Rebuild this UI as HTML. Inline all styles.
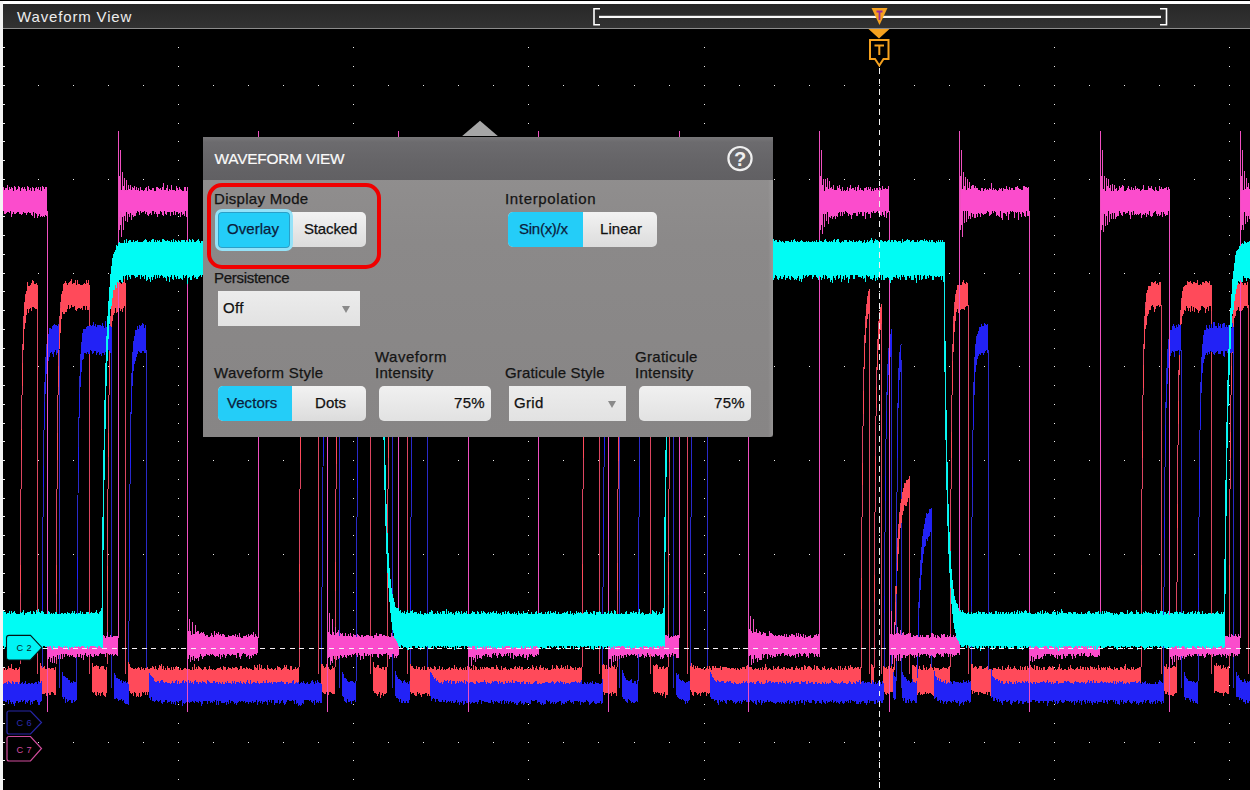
<!DOCTYPE html>
<html><head><meta charset="utf-8">
<style>
*{margin:0;padding:0;box-sizing:border-box}
html,body{width:1250px;height:790px;overflow:hidden;background:#000}
body{position:relative;font-family:"Liberation Sans",sans-serif}
#scope{position:absolute;left:0;top:0}
.topwhite{position:absolute;left:0;top:1px;width:1250px;height:3px;background:#fff}
.leftwhite{position:absolute;left:0;top:1px;width:3px;height:789px;background:#f4f4f4}
.titlebar{position:absolute;left:3px;top:4px;width:1247px;height:24px;background:linear-gradient(#282828,#323232)}
.titleline{position:absolute;left:3px;top:28px;width:1247px;height:1px;background:#8c8c8c}
.title{position:absolute;left:17px;top:7.5px;font-size:15px;color:#ececec;letter-spacing:0.85px}
.dlg{position:absolute;left:203px;top:137px;width:570px;height:300px;background:linear-gradient(#939191,#8b8989 35%,#878585);border-bottom-right-radius:3px}
.dlg .rs{position:absolute;right:0;top:43px;width:5px;bottom:0;background:linear-gradient(90deg,rgba(255,255,255,0),rgba(255,255,255,0.12))}
.dlg .hdr{position:absolute;left:0;top:0;width:570px;height:43px;background:linear-gradient(#787779,#6c6b6e 12%,#656467 60%,#616063)}
.dlg .ttl{position:absolute;left:11.5px;top:13px;font-size:15.4px;color:#fafafa;letter-spacing:-0.2px;-webkit-text-stroke:0.2px #fafafa}
.lbl{position:absolute;font-size:15px;color:#141414;line-height:16px;white-space:nowrap;letter-spacing:0.3px;-webkit-text-stroke:0.25px #141414}
.seg{position:absolute;height:35px;border-radius:5px;overflow:hidden;background:linear-gradient(#f2f2f2,#dcdcdc)}
.seg .on{position:absolute;left:0;top:0;bottom:0;background:#24cdf8}
.seg span{position:absolute;top:-1px;line-height:35px;font-size:15px;white-space:nowrap;letter-spacing:0.05px;-webkit-text-stroke:0.25px currentColor}
.dd{position:absolute;height:35px;background:linear-gradient(#ececec,#e2e2e2)}
.dd span{position:absolute;left:5px;top:-1px;line-height:35px;font-size:15px;color:#111;letter-spacing:0.3px;-webkit-text-stroke:0.25px #111}
.dd i{position:absolute;top:15px;width:0;height:0;border-left:4.5px solid transparent;border-right:4.5px solid transparent;border-top:7px solid #8a8a8a}
.num{position:absolute;height:35px;border-radius:5px;background:linear-gradient(#f0f0f0,#e2e2e2)}
.num span{position:absolute;right:6px;top:-1px;line-height:35px;font-size:15px;color:#111;letter-spacing:0.3px;-webkit-text-stroke:0.25px #111}
</style></head>
<body>
<svg id="scope" width="1250" height="790" viewBox="0 0 1250 790" shape-rendering="crispEdges">
<path fill="#f0f0f0" d="M178 47h1v1h-1zM178 66h1v1h-1zM178 85h1v1h-1zM178 104h1v1h-1zM178 123h1v1h-1zM178 141h1v1h-1zM178 160h1v1h-1zM178 179h1v1h-1zM178 198h1v1h-1zM178 216h1v1h-1zM178 235h1v1h-1zM178 254h1v1h-1zM178 273h1v1h-1zM178 291h1v1h-1zM178 310h1v1h-1zM178 329h1v1h-1zM178 348h1v1h-1zM178 366h1v1h-1zM178 385h1v1h-1zM178 404h1v1h-1zM178 423h1v1h-1zM178 441h1v1h-1zM178 460h1v1h-1zM178 479h1v1h-1zM178 498h1v1h-1zM178 516h1v1h-1zM178 535h1v1h-1zM178 554h1v1h-1zM178 573h1v1h-1zM178 592h1v1h-1zM178 610h1v1h-1zM178 629h1v1h-1zM178 648h1v1h-1zM178 667h1v1h-1zM178 685h1v1h-1zM178 704h1v1h-1zM178 723h1v1h-1zM178 742h1v1h-1zM178 760h1v1h-1zM178 779h1v1h-1zM353 47h1v1h-1zM353 66h1v1h-1zM353 85h1v1h-1zM353 104h1v1h-1zM353 123h1v1h-1zM353 141h1v1h-1zM353 160h1v1h-1zM353 179h1v1h-1zM353 198h1v1h-1zM353 216h1v1h-1zM353 235h1v1h-1zM353 254h1v1h-1zM353 273h1v1h-1zM353 291h1v1h-1zM353 310h1v1h-1zM353 329h1v1h-1zM353 348h1v1h-1zM353 366h1v1h-1zM353 385h1v1h-1zM353 404h1v1h-1zM353 423h1v1h-1zM353 441h1v1h-1zM353 460h1v1h-1zM353 479h1v1h-1zM353 498h1v1h-1zM353 516h1v1h-1zM353 535h1v1h-1zM353 554h1v1h-1zM353 573h1v1h-1zM353 592h1v1h-1zM353 610h1v1h-1zM353 629h1v1h-1zM353 648h1v1h-1zM353 667h1v1h-1zM353 685h1v1h-1zM353 704h1v1h-1zM353 723h1v1h-1zM353 742h1v1h-1zM353 760h1v1h-1zM353 779h1v1h-1zM528 47h1v1h-1zM528 66h1v1h-1zM528 85h1v1h-1zM528 104h1v1h-1zM528 123h1v1h-1zM528 141h1v1h-1zM528 160h1v1h-1zM528 179h1v1h-1zM528 198h1v1h-1zM528 216h1v1h-1zM528 235h1v1h-1zM528 254h1v1h-1zM528 273h1v1h-1zM528 291h1v1h-1zM528 310h1v1h-1zM528 329h1v1h-1zM528 348h1v1h-1zM528 366h1v1h-1zM528 385h1v1h-1zM528 404h1v1h-1zM528 423h1v1h-1zM528 441h1v1h-1zM528 460h1v1h-1zM528 479h1v1h-1zM528 498h1v1h-1zM528 516h1v1h-1zM528 535h1v1h-1zM528 554h1v1h-1zM528 573h1v1h-1zM528 592h1v1h-1zM528 610h1v1h-1zM528 629h1v1h-1zM528 648h1v1h-1zM528 667h1v1h-1zM528 685h1v1h-1zM528 704h1v1h-1zM528 723h1v1h-1zM528 742h1v1h-1zM528 760h1v1h-1zM528 779h1v1h-1zM704 47h1v1h-1zM704 66h1v1h-1zM704 85h1v1h-1zM704 104h1v1h-1zM704 123h1v1h-1zM704 141h1v1h-1zM704 160h1v1h-1zM704 179h1v1h-1zM704 198h1v1h-1zM704 216h1v1h-1zM704 235h1v1h-1zM704 254h1v1h-1zM704 273h1v1h-1zM704 291h1v1h-1zM704 310h1v1h-1zM704 329h1v1h-1zM704 348h1v1h-1zM704 366h1v1h-1zM704 385h1v1h-1zM704 404h1v1h-1zM704 423h1v1h-1zM704 441h1v1h-1zM704 460h1v1h-1zM704 479h1v1h-1zM704 498h1v1h-1zM704 516h1v1h-1zM704 535h1v1h-1zM704 554h1v1h-1zM704 573h1v1h-1zM704 592h1v1h-1zM704 610h1v1h-1zM704 629h1v1h-1zM704 648h1v1h-1zM704 667h1v1h-1zM704 685h1v1h-1zM704 704h1v1h-1zM704 723h1v1h-1zM704 742h1v1h-1zM704 760h1v1h-1zM704 779h1v1h-1zM879 47h1v1h-1zM879 66h1v1h-1zM879 85h1v1h-1zM879 104h1v1h-1zM879 123h1v1h-1zM879 141h1v1h-1zM879 160h1v1h-1zM879 179h1v1h-1zM879 198h1v1h-1zM879 216h1v1h-1zM879 235h1v1h-1zM879 254h1v1h-1zM879 273h1v1h-1zM879 291h1v1h-1zM879 310h1v1h-1zM879 329h1v1h-1zM879 348h1v1h-1zM879 366h1v1h-1zM879 385h1v1h-1zM879 404h1v1h-1zM879 423h1v1h-1zM879 441h1v1h-1zM879 460h1v1h-1zM879 479h1v1h-1zM879 498h1v1h-1zM879 516h1v1h-1zM879 535h1v1h-1zM879 554h1v1h-1zM879 573h1v1h-1zM879 592h1v1h-1zM879 610h1v1h-1zM879 629h1v1h-1zM879 648h1v1h-1zM879 667h1v1h-1zM879 685h1v1h-1zM879 704h1v1h-1zM879 723h1v1h-1zM879 742h1v1h-1zM879 760h1v1h-1zM879 779h1v1h-1zM1054 47h1v1h-1zM1054 66h1v1h-1zM1054 85h1v1h-1zM1054 104h1v1h-1zM1054 123h1v1h-1zM1054 141h1v1h-1zM1054 160h1v1h-1zM1054 179h1v1h-1zM1054 198h1v1h-1zM1054 216h1v1h-1zM1054 235h1v1h-1zM1054 254h1v1h-1zM1054 273h1v1h-1zM1054 291h1v1h-1zM1054 310h1v1h-1zM1054 329h1v1h-1zM1054 348h1v1h-1zM1054 366h1v1h-1zM1054 385h1v1h-1zM1054 404h1v1h-1zM1054 423h1v1h-1zM1054 441h1v1h-1zM1054 460h1v1h-1zM1054 479h1v1h-1zM1054 498h1v1h-1zM1054 516h1v1h-1zM1054 535h1v1h-1zM1054 554h1v1h-1zM1054 573h1v1h-1zM1054 592h1v1h-1zM1054 610h1v1h-1zM1054 629h1v1h-1zM1054 648h1v1h-1zM1054 667h1v1h-1zM1054 685h1v1h-1zM1054 704h1v1h-1zM1054 723h1v1h-1zM1054 742h1v1h-1zM1054 760h1v1h-1zM1054 779h1v1h-1zM1229 47h1v1h-1zM1229 66h1v1h-1zM1229 85h1v1h-1zM1229 104h1v1h-1zM1229 123h1v1h-1zM1229 141h1v1h-1zM1229 160h1v1h-1zM1229 179h1v1h-1zM1229 198h1v1h-1zM1229 216h1v1h-1zM1229 235h1v1h-1zM1229 254h1v1h-1zM1229 273h1v1h-1zM1229 291h1v1h-1zM1229 310h1v1h-1zM1229 329h1v1h-1zM1229 348h1v1h-1zM1229 366h1v1h-1zM1229 385h1v1h-1zM1229 404h1v1h-1zM1229 423h1v1h-1zM1229 441h1v1h-1zM1229 460h1v1h-1zM1229 479h1v1h-1zM1229 498h1v1h-1zM1229 516h1v1h-1zM1229 535h1v1h-1zM1229 554h1v1h-1zM1229 573h1v1h-1zM1229 592h1v1h-1zM1229 610h1v1h-1zM1229 629h1v1h-1zM1229 648h1v1h-1zM1229 667h1v1h-1zM1229 685h1v1h-1zM1229 704h1v1h-1zM1229 723h1v1h-1zM1229 742h1v1h-1zM1229 760h1v1h-1zM1229 779h1v1h-1zM38 85h1v1h-1zM73 85h1v1h-1zM108 85h1v1h-1zM143 85h1v1h-1zM178 85h1v1h-1zM213 85h1v1h-1zM248 85h1v1h-1zM283 85h1v1h-1zM318 85h1v1h-1zM353 85h1v1h-1zM388 85h1v1h-1zM423 85h1v1h-1zM458 85h1v1h-1zM493 85h1v1h-1zM528 85h1v1h-1zM563 85h1v1h-1zM598 85h1v1h-1zM634 85h1v1h-1zM669 85h1v1h-1zM704 85h1v1h-1zM739 85h1v1h-1zM774 85h1v1h-1zM809 85h1v1h-1zM844 85h1v1h-1zM879 85h1v1h-1zM914 85h1v1h-1zM949 85h1v1h-1zM984 85h1v1h-1zM1019 85h1v1h-1zM1054 85h1v1h-1zM1089 85h1v1h-1zM1124 85h1v1h-1zM1159 85h1v1h-1zM1194 85h1v1h-1zM1229 85h1v1h-1zM38 179h1v1h-1zM73 179h1v1h-1zM108 179h1v1h-1zM143 179h1v1h-1zM178 179h1v1h-1zM213 179h1v1h-1zM248 179h1v1h-1zM283 179h1v1h-1zM318 179h1v1h-1zM353 179h1v1h-1zM388 179h1v1h-1zM423 179h1v1h-1zM458 179h1v1h-1zM493 179h1v1h-1zM528 179h1v1h-1zM563 179h1v1h-1zM598 179h1v1h-1zM634 179h1v1h-1zM669 179h1v1h-1zM704 179h1v1h-1zM739 179h1v1h-1zM774 179h1v1h-1zM809 179h1v1h-1zM844 179h1v1h-1zM879 179h1v1h-1zM914 179h1v1h-1zM949 179h1v1h-1zM984 179h1v1h-1zM1019 179h1v1h-1zM1054 179h1v1h-1zM1089 179h1v1h-1zM1124 179h1v1h-1zM1159 179h1v1h-1zM1194 179h1v1h-1zM1229 179h1v1h-1zM38 273h1v1h-1zM73 273h1v1h-1zM108 273h1v1h-1zM143 273h1v1h-1zM178 273h1v1h-1zM213 273h1v1h-1zM248 273h1v1h-1zM283 273h1v1h-1zM318 273h1v1h-1zM353 273h1v1h-1zM388 273h1v1h-1zM423 273h1v1h-1zM458 273h1v1h-1zM493 273h1v1h-1zM528 273h1v1h-1zM563 273h1v1h-1zM598 273h1v1h-1zM634 273h1v1h-1zM669 273h1v1h-1zM704 273h1v1h-1zM739 273h1v1h-1zM774 273h1v1h-1zM809 273h1v1h-1zM844 273h1v1h-1zM879 273h1v1h-1zM914 273h1v1h-1zM949 273h1v1h-1zM984 273h1v1h-1zM1019 273h1v1h-1zM1054 273h1v1h-1zM1089 273h1v1h-1zM1124 273h1v1h-1zM1159 273h1v1h-1zM1194 273h1v1h-1zM1229 273h1v1h-1zM38 366h1v1h-1zM73 366h1v1h-1zM108 366h1v1h-1zM143 366h1v1h-1zM178 366h1v1h-1zM213 366h1v1h-1zM248 366h1v1h-1zM283 366h1v1h-1zM318 366h1v1h-1zM353 366h1v1h-1zM388 366h1v1h-1zM423 366h1v1h-1zM458 366h1v1h-1zM493 366h1v1h-1zM528 366h1v1h-1zM563 366h1v1h-1zM598 366h1v1h-1zM634 366h1v1h-1zM669 366h1v1h-1zM704 366h1v1h-1zM739 366h1v1h-1zM774 366h1v1h-1zM809 366h1v1h-1zM844 366h1v1h-1zM879 366h1v1h-1zM914 366h1v1h-1zM949 366h1v1h-1zM984 366h1v1h-1zM1019 366h1v1h-1zM1054 366h1v1h-1zM1089 366h1v1h-1zM1124 366h1v1h-1zM1159 366h1v1h-1zM1194 366h1v1h-1zM1229 366h1v1h-1zM38 460h1v1h-1zM73 460h1v1h-1zM108 460h1v1h-1zM143 460h1v1h-1zM178 460h1v1h-1zM213 460h1v1h-1zM248 460h1v1h-1zM283 460h1v1h-1zM318 460h1v1h-1zM353 460h1v1h-1zM388 460h1v1h-1zM423 460h1v1h-1zM458 460h1v1h-1zM493 460h1v1h-1zM528 460h1v1h-1zM563 460h1v1h-1zM598 460h1v1h-1zM634 460h1v1h-1zM669 460h1v1h-1zM704 460h1v1h-1zM739 460h1v1h-1zM774 460h1v1h-1zM809 460h1v1h-1zM844 460h1v1h-1zM879 460h1v1h-1zM914 460h1v1h-1zM949 460h1v1h-1zM984 460h1v1h-1zM1019 460h1v1h-1zM1054 460h1v1h-1zM1089 460h1v1h-1zM1124 460h1v1h-1zM1159 460h1v1h-1zM1194 460h1v1h-1zM1229 460h1v1h-1zM38 554h1v1h-1zM73 554h1v1h-1zM108 554h1v1h-1zM143 554h1v1h-1zM178 554h1v1h-1zM213 554h1v1h-1zM248 554h1v1h-1zM283 554h1v1h-1zM318 554h1v1h-1zM353 554h1v1h-1zM388 554h1v1h-1zM423 554h1v1h-1zM458 554h1v1h-1zM493 554h1v1h-1zM528 554h1v1h-1zM563 554h1v1h-1zM598 554h1v1h-1zM634 554h1v1h-1zM669 554h1v1h-1zM704 554h1v1h-1zM739 554h1v1h-1zM774 554h1v1h-1zM809 554h1v1h-1zM844 554h1v1h-1zM879 554h1v1h-1zM914 554h1v1h-1zM949 554h1v1h-1zM984 554h1v1h-1zM1019 554h1v1h-1zM1054 554h1v1h-1zM1089 554h1v1h-1zM1124 554h1v1h-1zM1159 554h1v1h-1zM1194 554h1v1h-1zM1229 554h1v1h-1zM38 648h1v1h-1zM73 648h1v1h-1zM108 648h1v1h-1zM143 648h1v1h-1zM178 648h1v1h-1zM213 648h1v1h-1zM248 648h1v1h-1zM283 648h1v1h-1zM318 648h1v1h-1zM353 648h1v1h-1zM388 648h1v1h-1zM423 648h1v1h-1zM458 648h1v1h-1zM493 648h1v1h-1zM528 648h1v1h-1zM563 648h1v1h-1zM598 648h1v1h-1zM634 648h1v1h-1zM669 648h1v1h-1zM704 648h1v1h-1zM739 648h1v1h-1zM774 648h1v1h-1zM809 648h1v1h-1zM844 648h1v1h-1zM879 648h1v1h-1zM914 648h1v1h-1zM949 648h1v1h-1zM984 648h1v1h-1zM1019 648h1v1h-1zM1054 648h1v1h-1zM1089 648h1v1h-1zM1124 648h1v1h-1zM1159 648h1v1h-1zM1194 648h1v1h-1zM1229 648h1v1h-1zM38 742h1v1h-1zM73 742h1v1h-1zM108 742h1v1h-1zM143 742h1v1h-1zM178 742h1v1h-1zM213 742h1v1h-1zM248 742h1v1h-1zM283 742h1v1h-1zM318 742h1v1h-1zM353 742h1v1h-1zM388 742h1v1h-1zM423 742h1v1h-1zM458 742h1v1h-1zM493 742h1v1h-1zM528 742h1v1h-1zM563 742h1v1h-1zM598 742h1v1h-1zM634 742h1v1h-1zM669 742h1v1h-1zM704 742h1v1h-1zM739 742h1v1h-1zM774 742h1v1h-1zM809 742h1v1h-1zM844 742h1v1h-1zM879 742h1v1h-1zM914 742h1v1h-1zM949 742h1v1h-1zM984 742h1v1h-1zM1019 742h1v1h-1zM1054 742h1v1h-1zM1089 742h1v1h-1zM1124 742h1v1h-1zM1159 742h1v1h-1zM1194 742h1v1h-1zM1229 742h1v1h-1zM3 47h2v1h-2zM3 66h2v1h-2zM3 85h2v1h-2zM3 104h2v1h-2zM3 123h2v1h-2zM3 141h2v1h-2zM3 160h2v1h-2zM3 179h2v1h-2zM3 198h2v1h-2zM3 216h2v1h-2zM3 235h2v1h-2zM3 254h2v1h-2zM3 273h2v1h-2zM3 291h2v1h-2zM3 310h2v1h-2zM3 329h2v1h-2zM3 348h2v1h-2zM3 366h2v1h-2zM3 385h2v1h-2zM3 404h2v1h-2zM3 423h2v1h-2zM3 441h2v1h-2zM3 460h2v1h-2zM3 479h2v1h-2zM3 498h2v1h-2zM3 516h2v1h-2zM3 535h2v1h-2zM3 554h2v1h-2zM3 573h2v1h-2zM3 592h2v1h-2zM3 610h2v1h-2zM3 629h2v1h-2zM3 648h2v1h-2zM3 667h2v1h-2zM3 685h2v1h-2zM3 704h2v1h-2zM3 723h2v1h-2zM3 742h2v1h-2zM3 760h2v1h-2zM3 779h2v1h-2z"/>
<g>
<path fill="none" stroke="#dc4660" stroke-width="1" d="M20 670 L20.3 604.2 L20.6 549.6 L20.9 504.4 L21.2 466.9 L21.5 435.8 L21.8 410 L22.1 388.6 L22.4 370.9 L22.7 356.2 L23 344 L23.3 333.9 L23.6 325.6 L23.9 318.6 L24.2 312.9 L24.5 308.1 L24.8 304.2 L25.1 300.9 L25.4 298.2 L25.7 295.9 L26 294.1M37.5 305V674M56 670 L56.3 604.2 L56.6 549.6 L56.9 504.4 L57.2 466.9 L57.5 435.8 L57.8 410 L58.1 388.6 L58.4 370.9 L58.7 356.2 L59 344 L59.3 333.9 L59.6 325.6 L59.9 318.6 L60.2 312.9 L60.5 308.1 L60.8 304.2 L61.1 300.9 L61.4 298.2 L61.7 295.9 L62 294.1M89.5 305V674M107 670 L107.3 604.2 L107.6 549.6 L107.9 504.4 L108.2 466.9 L108.5 435.8 L108.8 410 L109.1 388.6 L109.4 370.9 L109.7 356.2 L110 344 L110.3 333.9 L110.6 325.6 L110.9 318.6 L111.2 312.9 L111.5 308.1 L111.8 304.2 L112.1 300.9 L112.4 298.2 L112.7 295.9 L113 294.1M125.5 305V674M299 670 L299.3 604.2 L299.6 549.6 L299.9 504.4 L300.2 466.9 L300.5 435.8 L300.8 410 L301.1 388.6 L301.4 370.9 L301.7 356.2 L302 344 L302.3 333.9 L302.6 325.6 L302.9 318.6 L303.2 312.9 L303.5 308.1 L303.8 304.2 L304.1 300.9 L304.4 298.2 L304.7 295.9 L305 294.1M318.5 305V674M335 670 L335.3 604.2 L335.6 549.6 L335.9 504.4 L336.2 466.9 L336.5 435.8 L336.8 410 L337.1 388.6 L337.4 370.9 L337.7 356.2 L338 344 L338.3 333.9 L338.6 325.6 L338.9 318.6 L339.2 312.9 L339.5 308.1 L339.8 304.2 L340.1 300.9 L340.4 298.2 L340.7 295.9 L341 294.1M370.5 305V674M387 670 L387.3 604.2 L387.6 549.6 L387.9 504.4 L388.2 466.9 L388.5 435.8 L388.8 410 L389.1 388.6 L389.4 370.9 L389.7 356.2 L390 344 L390.3 333.9 L390.6 325.6 L390.9 318.6 L391.2 312.9 L391.5 308.1 L391.8 304.2 L392.1 300.9 L392.4 298.2 L392.7 295.9 L393 294.1M407.5 305V674M582 670 L582.3 604.2 L582.6 549.6 L582.9 504.4 L583.2 466.9 L583.5 435.8 L583.8 410 L584.1 388.6 L584.4 370.9 L584.7 356.2 L585 344 L585.3 333.9 L585.6 325.6 L585.9 318.6 L586.2 312.9 L586.5 308.1 L586.8 304.2 L587.1 300.9 L587.4 298.2 L587.7 295.9 L588 294.1M599.5 305V674M617 670 L617.3 604.2 L617.6 549.6 L617.9 504.4 L618.2 466.9 L618.5 435.8 L618.8 410 L619.1 388.6 L619.4 370.9 L619.7 356.2 L620 344 L620.3 333.9 L620.6 325.6 L620.9 318.6 L621.2 312.9 L621.5 308.1 L621.8 304.2 L622.1 300.9 L622.4 298.2 L622.7 295.9 L623 294.1M650.5 305V674M668 670 L668.3 604.2 L668.6 549.6 L668.9 504.4 L669.2 466.9 L669.5 435.8 L669.8 410 L670.1 388.6 L670.4 370.9 L670.7 356.2 L671 344 L671.3 333.9 L671.6 325.6 L671.9 318.6 L672.2 312.9 L672.5 308.1 L672.8 304.2 L673.1 300.9 L673.4 298.2 L673.7 295.9 L674 294.1M687.5 305V674M861 670 L861.3 616.5 L861.6 570.5 L861.9 530.8 L862.2 496.7 L862.5 467.4 L862.8 442.1 L863.1 420.4 L863.3 401.7 L863.6 385.5 L863.9 371.7 L864.2 359.7 L864.5 349.5 L864.8 340.6 L865.1 333 L865.4 326.5 L865.7 320.8 L866 316 L866.3 311.8 L866.6 308.2 L866.9 305.1 L867.2 302.5 L867.5 300.2 L867.7 298.2 L868 296.5 L868.3 295 L868.6 293.8 L868.9 292.7 L869.2 291.8 L869.5 291 L869.8 290.3M869.5 304V674M874 670 L874.3 618.5 L874.5 574.1 L874.8 535.9 L875.1 503.1 L875.3 474.8 L875.6 450.4 L875.8 429.5 L876.1 411.4 L876.4 395.9 L876.6 382.6 L876.9 371.1 L877.2 361.2 L877.4 352.6 L877.7 345.3 L878 339 L878.2 333.6 L878.5 328.9 L878.8 324.9 L879 321.4 L879.3 318.4 L879.5 315.9 L879.8 313.6 L880.1 311.7 L880.3 310.1 L880.6 308.7 L880.9 307.5 L881.1 306.4 L881.4 305.5 L881.7 304.8 L881.9 304.1M881.5 318V674M894 670 L894.5 643.1 L895.1 620 L895.6 600.1 L896.1 582.9 L896.6 568.2 L897.2 555.5 L897.7 544.5 L898.2 535.1 L898.8 527 L899.3 520.1 L899.8 514.1 L900.3 508.9 L900.9 504.5 L901.4 500.6 L901.9 497.3 L902.4 494.5 L903 492.1 L903.5 490 L904 488.2 L904.6 486.6 L905.1 485.3 L905.6 484.1 L906.1 483.1 L906.7 482.3 L907.2 481.5 L907.7 480.9 L908.3 480.4 L908.8 479.9 L909.3 479.5 L909.8 479.1M909.5 495V674M950 670 L950.3 604.2 L950.6 549.6 L950.9 504.4 L951.2 466.9 L951.5 435.8 L951.8 410 L952.1 388.6 L952.4 370.9 L952.7 356.2 L953 344 L953.3 333.9 L953.6 325.6 L953.9 318.6 L954.2 312.9 L954.5 308.1 L954.8 304.2 L955.1 300.9 L955.4 298.2 L955.7 295.9 L956 294.1M968.5 305V674M1141 670 L1141.3 604.2 L1141.6 549.6 L1141.9 504.4 L1142.2 466.9 L1142.5 435.8 L1142.8 410 L1143.1 388.6 L1143.4 370.9 L1143.7 356.2 L1144 344 L1144.3 333.9 L1144.6 325.6 L1144.9 318.6 L1145.2 312.9 L1145.5 308.1 L1145.8 304.2 L1146.1 300.9 L1146.4 298.2 L1146.7 295.9 L1147 294.1M1161.5 305V674M1176.6 670 L1176.9 604.2 L1177.2 549.6 L1177.5 504.4 L1177.8 466.9 L1178.1 435.8 L1178.4 410 L1178.7 388.6 L1179 370.9 L1179.3 356.2 L1179.6 344 L1179.9 333.9 L1180.2 325.6 L1180.5 318.6 L1180.8 312.9 L1181.1 308.1 L1181.4 304.2 L1181.7 300.9 L1182 298.2 L1182.3 295.9 L1182.6 294.1M1211.5 305V674M1229 670 L1229.3 604.2 L1229.6 549.6 L1229.9 504.4 L1230.2 466.9 L1230.5 435.8 L1230.8 410 L1231.1 388.6 L1231.4 370.9 L1231.7 356.2 L1232 344 L1232.3 333.9 L1232.6 325.6 L1232.9 318.6 L1233.2 312.9 L1233.5 308.1 L1233.8 304.2 L1234.1 300.9 L1234.4 298.2 L1234.7 295.9 L1235 294.1M1248.5 305V674"/>
<path fill="none" stroke="#2a2ac8" stroke-width="1" d="M42 684 L42.3 623.1 L42.6 572.7 L42.9 530.8 L43.2 496.2 L43.5 467.4 L43.8 443.6 L44.1 423.8 L44.4 407.4 L44.7 393.9 L45 382.6 L45.3 373.3 L45.6 365.5 L45.9 359.1 L46.2 353.8 L46.5 349.4 L46.8 345.7 L47.1 342.7 L47.4 340.2 L47.7 338.1 L48 336.4M59.5 350V688M76.8 684 L77.1 623.1 L77.4 572.7 L77.7 530.8 L78 496.2 L78.3 467.4 L78.6 443.6 L78.9 423.8 L79.2 407.4 L79.5 393.9 L79.8 382.6 L80.1 373.3 L80.4 365.5 L80.7 359.1 L81 353.8 L81.3 349.4 L81.6 345.7 L81.9 342.7 L82.2 340.2 L82.5 338.1 L82.8 336.4M111.5 350V688M128.7 684 L129 623.1 L129.3 572.7 L129.6 530.8 L129.9 496.2 L130.2 467.4 L130.5 443.6 L130.8 423.8 L131.1 407.4 L131.4 393.9 L131.7 382.6 L132 373.3 L132.3 365.5 L132.6 359.1 L132.9 353.8 L133.2 349.4 L133.5 345.7 L133.8 342.7 L134.1 340.2 L134.4 338.1 L134.7 336.4M146.5 350V688M321.5 684 L321.8 623.1 L322.1 572.7 L322.4 530.8 L322.7 496.2 L323 467.4 L323.3 443.6 L323.6 423.8 L323.9 407.4 L324.2 393.9 L324.5 382.6 L324.8 373.3 L325.1 365.5 L325.4 359.1 L325.7 353.8 L326 349.4 L326.3 345.7 L326.6 342.7 L326.9 340.2 L327.2 338.1 L327.5 336.4M339.5 350V688M356 684 L356.3 623.1 L356.6 572.7 L356.9 530.8 L357.2 496.2 L357.5 467.4 L357.8 443.6 L358.1 423.8 L358.4 407.4 L358.7 393.9 L359 382.6 L359.3 373.3 L359.6 365.5 L359.9 359.1 L360.2 353.8 L360.5 349.4 L360.8 345.7 L361.1 342.7 L361.4 340.2 L361.7 338.1 L362 336.4M392.5 350V688M410 684 L410.3 623.1 L410.6 572.7 L410.9 530.8 L411.2 496.2 L411.5 467.4 L411.8 443.6 L412.1 423.8 L412.4 407.4 L412.7 393.9 L413 382.6 L413.3 373.3 L413.6 365.5 L413.9 359.1 L414.2 353.8 L414.5 349.4 L414.8 345.7 L415.1 342.7 L415.4 340.2 L415.7 338.1 L416 336.4M427.5 350V688M602.5 684 L602.8 623.1 L603.1 572.7 L603.4 530.8 L603.7 496.2 L604 467.4 L604.3 443.6 L604.6 423.8 L604.9 407.4 L605.2 393.9 L605.5 382.6 L605.8 373.3 L606.1 365.5 L606.4 359.1 L606.7 353.8 L607 349.4 L607.3 345.7 L607.6 342.7 L607.9 340.2 L608.2 338.1 L608.5 336.4M619.5 350V688M638 684 L638.3 623.1 L638.6 572.7 L638.9 530.8 L639.2 496.2 L639.5 467.4 L639.8 443.6 L640.1 423.8 L640.4 407.4 L640.7 393.9 L641 382.6 L641.3 373.3 L641.6 365.5 L641.9 359.1 L642.2 353.8 L642.5 349.4 L642.8 345.7 L643.1 342.7 L643.4 340.2 L643.7 338.1 L644 336.4M673.5 350V688M690 684 L690.3 623.1 L690.6 572.7 L690.9 530.8 L691.2 496.2 L691.5 467.4 L691.8 443.6 L692.1 423.8 L692.4 407.4 L692.7 393.9 L693 382.6 L693.3 373.3 L693.6 365.5 L693.9 359.1 L694.2 353.8 L694.5 349.4 L694.8 345.7 L695.1 342.7 L695.4 340.2 L695.7 338.1 L696 336.4M707.5 350V688M884 684 L884.3 634.3 L884.5 591.5 L884.8 554.6 L885.1 522.9 L885.3 495.6 L885.6 472.1 L885.8 451.9 L886.1 434.5 L886.4 419.5 L886.6 406.7 L886.9 395.6 L887.2 386 L887.4 377.8 L887.7 370.7 L888 364.6 L888.2 359.4 L888.5 354.9 L888.8 351 L889 347.7 L889.3 344.8 L889.5 342.3 L889.8 340.2 L890.1 338.3 L890.3 336.8 L890.6 335.4 L890.9 334.2 L891.1 333.2 L891.4 332.4 L891.7 331.6 L891.9 331M891.5 347V688M896 684 L896.2 637.1 L896.4 596.5 L896.5 561.5 L896.7 531.3 L896.9 505.2 L897.1 482.7 L897.2 463.2 L897.4 446.4 L897.6 431.9 L897.8 419.4 L897.9 408.5 L898.1 399.2 L898.3 391.1 L898.5 384.1 L898.6 378.1 L898.8 372.9 L899 368.4 L899.2 364.5 L899.3 361.2 L899.5 358.3 L899.7 355.8 L899.9 353.7 L900 351.8 L900.2 350.2 L900.4 348.8 L900.6 347.6 L900.8 346.6 L900.9 345.7 L901.1 344.9 L901.3 344.2M901.5 360V688M917 684 L917.5 659.6 L918 638.6 L918.5 620.6 L918.9 605 L919.4 591.7 L919.9 580.1 L920.4 570.2 L920.9 561.7 L921.4 554.4 L921.9 548 L922.4 542.6 L922.8 537.9 L923.3 533.9 L923.8 530.4 L924.3 527.4 L924.8 524.9 L925.3 522.7 L925.8 520.8 L926.3 519.1 L926.7 517.7 L927.2 516.5 L927.7 515.5 L928.2 514.6 L928.7 513.8 L929.2 513.1 L929.7 512.5 L930.1 512 L930.6 511.6 L931.1 511.3 L931.6 510.9M931.5 529V688M971 684 L971.3 623.1 L971.6 572.7 L971.9 530.8 L972.2 496.2 L972.5 467.4 L972.8 443.6 L973.1 423.8 L973.4 407.4 L973.7 393.9 L974 382.6 L974.3 373.3 L974.6 365.5 L974.9 359.1 L975.2 353.8 L975.5 349.4 L975.8 345.7 L976.1 342.7 L976.4 340.2 L976.7 338.1 L977 336.4M988.5 350V688M1163.5 684 L1163.8 623.1 L1164.1 572.7 L1164.4 530.8 L1164.7 496.2 L1165 467.4 L1165.3 443.6 L1165.6 423.8 L1165.9 407.4 L1166.2 393.9 L1166.5 382.6 L1166.8 373.3 L1167.1 365.5 L1167.4 359.1 L1167.7 353.8 L1168 349.4 L1168.3 345.7 L1168.6 342.7 L1168.9 340.2 L1169.2 338.1 L1169.5 336.4M1181.5 350V688M1198 684 L1198.3 623.1 L1198.6 572.7 L1198.9 530.8 L1199.2 496.2 L1199.5 467.4 L1199.8 443.6 L1200.1 423.8 L1200.4 407.4 L1200.7 393.9 L1201 382.6 L1201.3 373.3 L1201.6 365.5 L1201.9 359.1 L1202.2 353.8 L1202.5 349.4 L1202.8 345.7 L1203.1 342.7 L1203.4 340.2 L1203.7 338.1 L1204 336.4M1233.5 350V688"/>
<path fill="#ff4a5a" d="M3 667.6H4V669.9H5V667.8H6V670H7V668.9H8V666.4H9V667.9H10V668.1H11V664.1H12V669H13V669.2H14V669.6H15V667.9H16V668.1H17V669.6H18V668.8H19V668.1H20V692.7H19V695.8H18V693.6H17V696.9H16V692.2H15V695.9H14V692H13V694.7H12V697H11V693.9H10V693.3H9V695.7H8V695.9H7V694.2H6V696H5V695.4H4V692.5H3ZM40 662.6H41V666.1H42V667.8H43V666.8H44V665.9H45V668.6H46V668.5H47V665.4H48V668H49V667.9H50V668.7H51V668.1H52V667.5H53V667.9H54V669.9H55V667.1H56V694.9H55V694.6H54V692.6H53V692.4H52V692.2H51V695H50V694.5H49V692.8H48V692H47V695.7H46V693.3H45V694.4H44V693.9H43V693.9H42V690.6H41V693.9H40ZM92 662.7H93V666.8H94V666.3H95V665.7H96V665H97V666.3H98V665.6H99V668.6H100V667.4H101V666H102V666.2H103V666.1H104V669H105V669.5H106V666.5H107V693.4H106V696.5H105V695.5H104V694.6H103V692.3H102V692.8H101V695.7H100V692.9H99V694.6H98V691.9H97V696.4H96V695.2H95V691.9H94V693.1H93V692.2H92ZM128 662.4H129V663.8H130V666.8H131V668H132V668.3H133V669H134V668.5H135V667.7H136V668.5H137V668.3H138V667.2H139V667.6H140V669.6H141V667.4H142V669.1H143V668.2H144V669.8H145V667.6H146V668.4H147V667.3H148V668.7H149V668.5H150V667.6H151V668.3H152V666.3H153V666.7H154V669.4H155V666.3H156V668.7H157V669.7H158V667.7H159V664.8H160V665.6H161V663.9H162V668.9H163V666.1H164V669.7H165V668.4H166V669.6H167V666.1H168V667.9H169V667.9H170V669.9H171V667.1H172V669.7H173V666.9H174V668.8H175V666.6H176V666.4H177V667.4H178V667.6H179V669.9H180V667.9H181V669.9H182V669.9H183V668.7H184V668.3H185V668.1H186V669.1H187V669.2H188V669.2H189V669.3H190V669.6H191V669.9H192V667.4H193V669.6H194V664.4H195V668.8H196V666.9H197V668.5H198V666.1H199V666.9H200V667.9H201V668.8H202V669.9H203V669.2H204V666.9H205V667.1H206V669.3H207V669.7H208V669.4H209V666.2H210V669.4H211V669.2H212V670H213V668.6H214V669.6H215V669.8H216V668.8H217V667.8H218V668.4H219V667.8H220V666.7H221V669.2H222V669.7H223V665.8H224V666.6H225V667.4H226V669.7H227V668.5H228V667H229V668.1H230V667.7H231V669.2H232V667H233V668.2H234V667.9H235V666.6H236V667.3H237V668.3H238V669.9H239V668.8H240V665.7H241V666.1H242V669H243V667.7H244V668H245V669.3H246V667.4H247V668H248V669.4H249V667.6H250V669.3H251V668.6H252V669.8H253V669.6H254V665.3H255V667H256V668.2H257V664.9H258V669.7H259V664.3H260V668.4H261V665.4H262V668.5H263V668.5H264V668.4H265V669.2H266V670H267V664.6H268V667.5H269V669.3H270V668.9H271V668.1H272V668.7H273V669.8H274V669.3H275V668.2H276V669.6H277V666.2H278V667H279V666.5H280V668.3H281V669.9H282V668.7H283V667.7H284V665.3H285V667.3H286V664.6H287V669.3H288V668.5H289V669.6H290V666.3H291V666H292V669.5H293V668.5H294V669.4H295V666.6H296V668.8H297V668.4H298V668.5H299V697H298V694.1H297V693.1H296V693.1H295V695.7H294V695.4H293V694.5H292V693.4H291V692H290V695.6H289V695.2H288V692.9H287V693.6H286V695.7H285V694.2H284V693.3H283V692H282V692.5H281V694.5H280V692.6H279V694.6H278V693.6H277V694.5H276V693.1H275V695.8H274V695.4H273V694.8H272V694.5H271V693.5H270V694.8H269V695.7H268V692.9H267V696.3H266V694.6H265V692.4H264V692.8H263V694.3H262V692.7H261V694H260V693.2H259V696.7H258V692.5H257V692.4H256V693.1H255V695.4H254V696H253V695.1H252V696.3H251V693H250V692.9H249V692.7H248V698.1H247V692.4H246V695H245V694.4H244V693H243V692.4H242V696.4H241V695H240V692.2H239V697.4H238V696.1H237V695.8H236V692.6H235V692.8H234V694.7H233V694.1H232V693.2H231V695.8H230V694.1H229V693.5H228V692.4H227V694.6H226V694.8H225V693.7H224V695.3H223V694.8H222V692H221V692.8H220V695.4H219V692.9H218V693.5H217V694.3H216V694H215V694.7H214V696.3H213V692.7H212V693H211V693H210V692.3H209V694.8H208V696H207V692.5H206V694.2H205V692.2H204V695H203V696.2H202V694.5H201V693.9H200V693H199V695.2H198V697.1H197V694.9H196V692.9H195V694H194V693.2H193V695.1H192V692.4H191V694H190V693.1H189V694.5H188V694.4H187V695H186V692.8H185V692.9H184V695.3H183V694.7H182V694.6H181V693.2H180V693.1H179V693.4H178V693.7H177V697H176V693H175V693.5H174V696.8H173V695H172V694.7H171V695.9H170V692.1H169V693.1H168V694H167V692.3H166V692.5H165V695.2H164V693.3H163V693.6H162V694H161V696.8H160V696.7H159V692.2H158V693.7H157V692.8H156V693.9H155V694.2H154V694.7H153V695.3H152V694.8H151V692.4H150V693.2H149V692.1H148V695.1H147V692.1H146V694.8H145V692.1H144V693H143V692.2H142V696H141V697.3H140V693.4H139V697.4H138V696.4H137V696.7H136V692.5H135V692H134V695.8H133V693.1H132V693.9H131V693.3H130V690.9H129V690.2H128ZM321 663.9H322V663.8H323V666.1H324V668.4H325V666.9H326V664H327V667.6H328V666.9H329V669.4H330V669.7H331V669.3H332V666H333V667.7H334V669.6H335V694H334V693.5H333V693.8H332V692.8H331V692.1H330V692.4H329V695.2H328V695.4H327V692.4H326V693.6H325V694.1H324V693.1H323V692.4H322V692.2H321ZM373 662.3H374V666.6H375V667.9H376V667.3H377V664.8H378V665.1H379V667.5H380V667.5H381V669.4H382V666.9H383V667H384V669.9H385V667.3H386V667.3H387V693H386V693.8H385V694.4H384V695.7H383V693.2H382V695H381V697.7H380V692.3H379V694.3H378V696.2H377V694.3H376V693.1H375V692.8H374V691.4H373ZM410 663.6H411V665.9H412V666.1H413V668.1H414V668.8H415V668.7H416V665.9H417V669.3H418V667.3H419V667.4H420V669.8H421V668.9H422V666.9H423V669.9H424V666.4H425V669.5H426V669.9H427V667H428V666.9H429V669.1H430V666.5H431V668.2H432V669.3H433V669H434V666.2H435V666.8H436V670H437V668.7H438V669.1H439V666.3H440V669.9H441V669.2H442V667.3H443V670H444V668.5H445V669.6H446V669.1H447V669.4H448V667.6H449V667H450V669.9H451V667.6H452V667.9H453V668.9H454V664.5H455V669.3H456V666.5H457V669H458V669.5H459V668.3H460V667.3H461V669.1H462V669.7H463V667.8H464V669.7H465V667.2H466V669.8H467V666.2H468V669.3H469V666.5H470V669.4H471V667.6H472V669.6H473V665.1H474V669.8H475V666.1H476V667.4H477V669.6H478V668.9H479V670H480V667.1H481V668.5H482V667.2H483V668.9H484V666.5H485V668.2H486V667.1H487V666.7H488V667.6H489V667.7H490V668.7H491V666.9H492V667.2H493V666.9H494V668.7H495V668.9H496V664.8H497V667.2H498V668.5H499V670H500V669.7H501V666.3H502V669.8H503V668.3H504V668.4H505V666.9H506V668.9H507V669.5H508V668.9H509V669.8H510V668.4H511V667.9H512V668.8H513V668.5H514V667.4H515V666.4H516V668.6H517V667.2H518V667.9H519V665.9H520V669.1H521V667H522V667.3H523V669.8H524V669.1H525V669.4H526V669.4H527V667.9H528V668.6H529V668.6H530V667.9H531V669H532V664.8H533V666.5H534V669.7H535V667.9H536V666.3H537V669.1H538V669.5H539V666.9H540V665H541V668H542V667.7H543V667.1H544V669.6H545V668.4H546V668.7H547V667.7H548V669.7H549V669.9H550V669.7H551V668.5H552V664.7H553V668.6H554V667.7H555V669H556V664.7H557V666.4H558V667.7H559V669.2H560V668.4H561V664.8H562V667.9H563V666.8H564V668.6H565V666.2H566V668.8H567V664.9H568V668.9H569V669.4H570V666.1H571V667.1H572V667.8H573V667.9H574V670H575V666.6H576V669.9H577V667.8H578V668H579V667.1H580V668H581V667.9H582V693.9H581V692.5H580V693.3H579V692.3H578V694.8H577V694.2H576V695H575V694.5H574V694.2H573V694.1H572V692.1H571V694H570V693.8H569V694.2H568V693.9H567V695.9H566V694.7H565V692.5H564V692H563V692.2H562V692.1H561V694H560V692.5H559V694.2H558V694.5H557V696.1H556V694.5H555V697.9H554V694.5H553V694.2H552V693.9H551V692.3H550V694.3H549V693.8H548V696.2H547V693H546V694.1H545V693.1H544V695.7H543V694H542V695.9H541V696.5H540V695.9H539V695H538V695.4H537V694.4H536V695.4H535V693.3H534V693.2H533V695H532V692H531V695H530V695.9H529V695H528V695.7H527V693.7H526V692.4H525V697.1H524V694.3H523V694.2H522V694.9H521V692.1H520V696.2H519V695.4H518V693.6H517V694.4H516V692.4H515V693H514V693.1H513V694.7H512V694.5H511V696.3H510V692.9H509V694.4H508V695.3H507V695.7H506V693.2H505V694.8H504V695.9H503V692.6H502V692.1H501V695.3H500V695.7H499V692.1H498V695.4H497V692.6H496V694.1H495V694.3H494V695.6H493V696H492V692.6H491V695.5H490V697H489V694.5H488V696.3H487V694.7H486V695.7H485V695.5H484V693.8H483V692.7H482V696H481V694.6H480V692.5H479V695.3H478V692.3H477V692.2H476V695.1H475V695.3H474V693.4H473V692.4H472V694.5H471V692.3H470V692.6H469V694.3H468V694H467V692.8H466V692.2H465V692.1H464V695.4H463V693.2H462V693H461V696H460V694.3H459V692.1H458V692.7H457V692H456V692.9H455V695.1H454V692.4H453V696.9H452V694.1H451V694.7H450V692.1H449V694H448V694H447V695H446V694.2H445V693.1H444V692.1H443V692.9H442V695.3H441V692H440V693.4H439V694.6H438V693.9H437V695.2H436V693.3H435V692.2H434V695H433V692.8H432V693H431V692.1H430V695.7H429V693.6H428V696H427V692.7H426V692.6H425V693.7H424V693.8H423V693.8H422V696.5H421V694.7H420V693.4H419V693.5H418V692.1H417V696.3H416V696.3H415V695.1H414V692.5H413V692.6H412V694.2H411V691.7H410ZM602 664.8H603V664.2H604V664.9H605V668.5H606V665.2H607V668.7H608V667.4H609V666.9H610V667.9H611V666H612V666.2H613V666.9H614V665H615V669.3H616V669.3H617V695.6H616V692.5H615V693.2H614V694.2H613V692.1H612V695.7H611V692.5H610V693.8H609V692.9H608V692.5H607V693.2H606V693.3H605V694.9H604V691.9H603V692H602ZM653 664.7H654V665.6H655V665.2H656V663.9H657V665.1H658V668.5H659V667.1H660V667.4H661V668.5H662V667.3H663V666.4H664V669H665V667.9H666V666.9H667V667.3H668V694.7H667V694.8H666V697.6H665V692H664V693.8H663V695.7H662V693H661V695.1H660V692.8H659V693H658V692.2H657V693H656V691.8H655V693.8H654V692H653ZM690 665.7H691V663.1H692V667.1H693V665.4H694V668.5H695V665.6H696V667.7H697V666.1H698V668H699V668.2H700V667.5H701V668.9H702V669H703V667.6H704V669.8H705V668.9H706V668.1H707V666.2H708V668.7H709V666H710V668.3H711V669.7H712V666.1H713V666.3H714V667.6H715V666.1H716V668.1H717V668.4H718V668.1H719V668H720V666H721V670H722V667.1H723V666.9H724V666.9H725V666.5H726V666.7H727V668.3H728V668.2H729V668H730V669.4H731V668.4H732V668H733V668.1H734V669.2H735V668.4H736V669.8H737V668.1H738V668.7H739V669.9H740V668.1H741V668.7H742V667.2H743V666.8H744V666.6H745V669.2H746V666.2H747V665.3H748V666.7H749V666.7H750V666.7H751V666.7H752V669.3H753V669.8H754V668.9H755V667.9H756V668.6H757V669.2H758V667.7H759V669.7H760V667.9H761V669.8H762V666.9H763V669.7H764V667.5H765V663.9H766V667.4H767V669.8H768V669.4H769V668.1H770V669.4H771V669.5H772V669.8H773V666.4H774V668.9H775V668.2H776V668.5H777V666.8H778V666.4H779V669H780V668.5H781V667.8H782V669.3H783V666.5H784V666.6H785V669.7H786V667.7H787V669.1H788V667.8H789V669.4H790V669.1H791V667.4H792V667.4H793V669.6H794V669.6H795V668.2H796V665.9H797V668.2H798V669.4H799V667.6H800V670H801V667.1H802V666.8H803V669.7H804V664.9H805V665.7H806V668.9H807V666.7H808V666.3H809V666.4H810V667.4H811V667.9H812V669.9H813V668.8H814V664.6H815V670H816V665.7H817V666.2H818V668.2H819V669.1H820V669.6H821V669.8H822V667.1H823V668.4H824V666.4H825V669.3H826V669.7H827V669.1H828V668.3H829V669.7H830V668H831V667.2H832V668.9H833V668.9H834V669.6H835V667.9H836V668.6H837V669.6H838V666H839V669.9H840V666.1H841V669.8H842V667.5H843V670H844V667.8H845V666.4H846V669.1H847V670H848V666.4H849V667.9H850V664.5H851V666.9H852V667.2H853V669.2H854V668.3H855V666.8H856V668.2H857V667H858V666.5H859V668.5H860V668.3H861V692.1H860V692.3H859V695.9H858V695H857V692H856V695.2H855V694.8H854V693.6H853V692.9H852V694.3H851V696.2H850V693.3H849V693.1H848V692.8H847V695.8H846V695.3H845V695.8H844V696.6H843V695.4H842V695.7H841V695H840V695.8H839V694.3H838V692.1H837V693H836V693.2H835V693.8H834V694.3H833V695.8H832V693.9H831V692.6H830V695.1H829V692.2H828V694.9H827V692.1H826V695.3H825V694.5H824V692.2H823V696.5H822V695.4H821V693.8H820V692.2H819V693H818V692H817V694.2H816V693.2H815V694.1H814V693.8H813V697.1H812V692.9H811V694.3H810V692.2H809V694.6H808V696H807V692.2H806V697.2H805V694.8H804V693.3H803V693.9H802V692.2H801V692.4H800V692.7H799V695.1H798V693.7H797V695H796V692.4H795V693.5H794V695.4H793V695H792V693.1H791V692.3H790V693.1H789V694.8H788V692.5H787V694.3H786V693H785V693.9H784V694.3H783V694H782V696.3H781V694.9H780V694.9H779V693.6H778V697.3H777V694.8H776V694.8H775V694.1H774V692.7H773V695.3H772V696.2H771V694.6H770V694.1H769V693.7H768V692.9H767V695.9H766V693.5H765V692.9H764V695.3H763V693.3H762V692.9H761V694.5H760V693.7H759V692.9H758V694.3H757V693.9H756V692.9H755V693.2H754V692.1H753V696.1H752V692.7H751V695.4H750V692.4H749V695.3H748V692.4H747V695.8H746V692.1H745V695.6H744V692.4H743V695.3H742V696.4H741V694.7H740V693.1H739V693.9H738V692.1H737V692.9H736V695.1H735V692H734V693.8H733V692.1H732V694.8H731V694.1H730V692.1H729V693.2H728V693.9H727V694.2H726V692.9H725V692.6H724V694.7H723V692.8H722V695.9H721V692.7H720V695.7H719V693.4H718V694.8H717V697.8H716V692.5H715V692.1H714V696H713V693.4H712V694.6H711V694.2H710V692.5H709V693.5H708V692.9H707V695.5H706V692.2H705V692.1H704V693.1H703V692H702V693.1H701V695.6H700V693H699V693.6H698V694.5H697V692.5H696V692.1H695V691.8H694V696.4H693V694.8H692V692H691V690.3H690ZM871 664.1H872V665.3H873V667.5H874V691.9H873V695.9H872V694H871ZM883 665.8H884V667.1H885V667.7H886V666.7H887V668.8H888V665.7H889V666.1H890V667.7H891V666.1H892V669.3H893V667.3H894V692.7H893V692.1H892V692.1H891V692.2H890V692H889V694H888V693H887V694.5H886V694.3H885V691.9H884V691.3H883ZM912 664.9H913V664.5H914V665.7H915V666.8H916V665H917V666.7H918V668.7H919V665.8H920V668.7H921V669.5H922V669.9H923V664.8H924V668.4H925V669.8H926V667.1H927V669.9H928V669.2H929V668.3H930V664.4H931V666.8H932V668.1H933V669.5H934V667.4H935V667.5H936V668.4H937V667.7H938V667.9H939V669.5H940V669.4H941V668.6H942V668.4H943V667.3H944V668.4H945V668.4H946V667.5H947V668.7H948V666.9H949V665.8H950V695.1H949V692.8H948V692.2H947V694.9H946V694.3H945V696H944V693.3H943V694.9H942V692.3H941V693H940V692.5H939V692.9H938V693.4H937V693.8H936V693.2H935V696.6H934V696.2H933V694.9H932V694.1H931V693H930V692.7H929V694.2H928V692.9H927V693.8H926V692.4H925V694.4H924V694.4H923V694.6H922V693.5H921V695.3H920V691.8H919V693.1H918V694.8H917V692.9H916V692.5H915V692.5H914V692.9H913V692.7H912ZM971 664.3H972V663.8H973V667.8H974V666.6H975V665.5H976V666.8H977V669.4H978V668.4H979V665.7H980V665.7H981V665.9H982V668.5H983V669.3H984V668.2H985V668H986V666.7H987V666.3H988V669.9H989V669H990V668.5H991V669H992V669.6H993V667.5H994V668.3H995V668.2H996V669.3H997V669.3H998V667.1H999V668.7H1000V668.7H1001V669.9H1002V665.8H1003V669.9H1004V669.6H1005V668.2H1006V668.5H1007V667.2H1008V664.7H1009V669.3H1010V667.2H1011V668.8H1012V669.4H1013V667.5H1014V665.6H1015V667.9H1016V669.2H1017V669.7H1018V669.2H1019V669.7H1020V666.1H1021V670H1022V666.5H1023V669.9H1024V667.4H1025V665.7H1026V669.8H1027V666H1028V667.5H1029V667.3H1030V665.2H1031V666.7H1032V668H1033V669.4H1034V664.6H1035V670H1036V666.2H1037V666.3H1038V669.9H1039V666.9H1040V669.6H1041V667.9H1042V669.9H1043V667.1H1044V667.4H1045V669.8H1046V669.8H1047V669.1H1048V667.3H1049V666.3H1050V666.9H1051V668.3H1052V665.5H1053V667.2H1054V669.7H1055V668.5H1056V669.6H1057V669H1058V666.7H1059V664.3H1060V668.5H1061V668.2H1062V669.5H1063V669.6H1064V668.9H1065V669.3H1066V669.9H1067V669.5H1068V667.2H1069V668.5H1070V664.6H1071V667.6H1072V669.1H1073V668.6H1074V670H1075V668.8H1076V668.1H1077V666.8H1078V669.2H1079V669.1H1080V666H1081V668.6H1082V667.2H1083V667.3H1084V669.6H1085V666.8H1086V669.9H1087V666.8H1088V667.7H1089V669.8H1090V666.3H1091V667.4H1092V667.1H1093V668.8H1094V667.2H1095V669.3H1096V668.3H1097V669.8H1098V665.1H1099V668.4H1100V669.5H1101V666.5H1102V667.5H1103V667.2H1104V667.7H1105V666.9H1106V669.9H1107V666.9H1108V668.1H1109V665.9H1110V668H1111V668.8H1112V668.7H1113V669.5H1114V666.8H1115V668.6H1116V667.6H1117V667.8H1118V669.8H1119V670H1120V667.3H1121V666.9H1122V668H1123V668.9H1124V666.2H1125V664.1H1126V669.7H1127V667.7H1128V668.7H1129V669.4H1130V669.8H1131V666.7H1132V669H1133V666.6H1134V669.9H1135V668.7H1136V669H1137V667.9H1138V668.4H1139V666.5H1140V669H1141V692.1H1140V694.3H1139V693.3H1138V695.4H1137V695.5H1136V692.2H1135V696.8H1134V694.8H1133V694.7H1132V692.7H1131V692.7H1130V693.2H1129V694.2H1128V694.3H1127V695.8H1126V694.8H1125V693.8H1124V695.2H1123V693.6H1122V692.3H1121V692.5H1120V692.7H1119V695.8H1118V694.6H1117V693.5H1116V693.1H1115V693.1H1114V694.8H1113V693.3H1112V694.1H1111V694.6H1110V693.4H1109V694.3H1108V692.7H1107V695.5H1106V692.7H1105V692.6H1104V692H1103V693.8H1102V696.3H1101V692.1H1100V694.7H1099V693.2H1098V693.7H1097V695.8H1096V694.4H1095V693.1H1094V695.6H1093V695.4H1092V695.3H1091V693.6H1090V696.3H1089V692.1H1088V693.5H1087V694.3H1086V693.1H1085V692.7H1084V694.9H1083V692.3H1082V694.7H1081V695.4H1080V694.6H1079V694.2H1078V692.2H1077V694.4H1076V694.1H1075V695.6H1074V694.1H1073V695.9H1072V693H1071V692.1H1070V694.3H1069V692.4H1068V693.3H1067V697H1066V693.7H1065V694.2H1064V692.5H1063V692.4H1062V695H1061V692H1060V692H1059V694.7H1058V694.5H1057V693.1H1056V696H1055V696H1054V698.2H1053V692.1H1052V692.2H1051V694.3H1050V693.8H1049V693.6H1048V694.6H1047V695H1046V693.8H1045V694.4H1044V694.7H1043V695.6H1042V695H1041V692H1040V694.5H1039V692.6H1038V692.3H1037V696.1H1036V692.3H1035V695.4H1034V693.6H1033V692.3H1032V693.4H1031V695.5H1030V693.4H1029V693.6H1028V694.2H1027V692H1026V694.5H1025V695.9H1024V694.6H1023V695H1022V692.8H1021V693.9H1020V692H1019V694.9H1018V692H1017V694.4H1016V694.1H1015V693.5H1014V694.6H1013V694.5H1012V693.3H1011V693.9H1010V694.5H1009V692.1H1008V692.1H1007V693.1H1006V696.1H1005V694.4H1004V692.3H1003V694.5H1002V696.9H1001V694.9H1000V694.1H999V694.4H998V695.1H997V692.5H996V692.5H995V695.6H994V695.9H993V692H992V692.2H991V696.4H990V692.3H989V692.2H988V695.4H987V692H986V693.7H985V693.5H984V693.9H983V693.4H982V692.6H981V691.9H980V691.9H979V694.8H978V691.9H977V692.1H976V691.7H975V693H974V691.1H973V693.8H972V690.2H971ZM1164 665.9H1165V667.3H1166V664.4H1167V668.5H1168V666.7H1169V667.8H1170V668.4H1171V667.5H1172V667.2H1173V666.3H1174V665.7H1175V666.7H1176V664.3H1177V693.2H1176V693.4H1175V693.8H1174V695.8H1173V695.5H1172V695H1171V695.1H1170V693.4H1169V694.9H1168V692.2H1167V693.9H1166V693.7H1165V690.5H1164ZM1214 665.2H1215V666.2H1216V662.9H1217V666.3H1218V665.3H1219V665.7H1220V665.1H1221V668.9H1222V668H1223V664.8H1224V667.5H1225V667.2H1226V669.3H1227V666.9H1228V666.2H1229V693.9H1228V693.9H1227V692.9H1226V692H1225V693.4H1224V695.7H1223V692.5H1222V692.9H1221V692.9H1220V692.9H1219V691.6H1218V692.2H1217V691H1216V691.1H1215V692.9H1214ZM20 565.3H21V429.4H22V363.3H23V327.4H24V303.2H25V294.6H26V291H27V281.7H28V285.7H29V285.7H30V284.8H31V282.5H32V280.4H33V281.1H34V284.4H35V283.8H36V283.3H37V284.9H38V309.8H37V308.6H36V309.2H35V308H34V307.2H33V306.6H32V310.8H31V308.4H30V308.7H29V312.6H28V308.8H27V314.7H26V322.6H25V329.2H24V350.4H23V386.3H22V460.1H21V593.1H20ZM56 564.8H57V433H58V365.7H59V324.9H60V307.5H61V294.9H62V291.3H63V283.9H64V282.9H65V281H66V283.1H67V285H68V283H69V281.7H70V280.5H71V279.3H72V284.4H73V283.1H74V283.2H75V279.9H76V284.5H77V280.4H78V284H79V283.9H80V285H81V284.6H82V285H83V284.3H84V282.8H85V284.3H86V279.9H87V283H88V280.1H89V284.6H90V307H89V310.1H88V309.9H87V306H86V310H85V306.3H84V306.1H83V309.9H82V307.5H81V309.4H80V308.2H79V308.3H78V309.4H77V311H76V310.2H75V305.6H74V307.2H73V307.4H72V305.2H71V308.1H70V308.5H69V305.2H68V308.8H67V312.3H66V311.9H65V314H64V314.2H63V312.4H62V318.9H61V333.2H60V349.2H59V386.5H58V460.4H57V593.7H56ZM107 565.5H108V432.8H109V365.7H110V327.8H111V303.4H112V293.5H113V289H114V281.5H115V283.5H116V283.6H117V281.4H118V283.2H119V281.8H120V283H121V284.2H122V281.9H123V282.2H124V279.2H125V283H126V306.8H125V306.2H124V307.7H123V311.5H122V308.9H121V310.6H120V308.4H119V308.9H118V312.2H117V312.5H116V307.5H115V313H114V314.8H113V320.8H112V333.3H111V350.8H110V388.6H109V456.6H108V591.2H107ZM299 563.7H300V430.5H301V362.4H302V327.6H303V304.3H304V292.7H305V290.7H306V283.6H307V285.2H308V285.7H309V281.4H310V283.3H311V283.1H312V281.9H313V281.3H314V283.7H315V284.3H316V284.4H317V283.2H318V309.2H317V306.9H316V310.5H315V305.3H314V308.4H313V310.9H312V305.5H311V308.6H310V309.6H309V309.3H308V307.1H307V311.4H306V312.3H305V317.9H304V333.5H303V352.5H302V388.3H301V463.2H300V592.1H299ZM335 562.3H336V431.1H337V364.8H338V325.1H339V305H340V297.2H341V289.8H342V286.8H343V286.6H344V282.8H345V283.2H346V281.5H347V280.6H348V282.6H349V280.4H350V281.1H351V284.2H352V283.7H353V283H354V280.6H355V282.3H356V278.9H357V281.3H358V281.8H359V279.3H360V283.7H361V284.7H362V283.9H363V283.9H364V281H365V284.7H366V281.7H367V279.6H368V282.8H369V283.9H370V309.3H369V305.7H368V307H367V305H366V306H365V310.6H364V306.7H363V310.6H362V308.2H361V307.1H360V308.9H359V310H358V305.3H357V309.6H356V307.2H355V310H354V305.7H353V306.5H352V311.9H351V305.1H350V306.9H349V308.8H348V309.7H347V309.4H346V313.1H345V312H344V308.5H343V315.1H342V312.9H341V318H340V330.5H339V348.8H338V392.1H337V464.2H336V590.7H335ZM387 562.6H388V431.2H389V363.8H390V323.9H391V306.2H392V293.3H393V287.9H394V285.3H395V285.4H396V284.3H397V284.4H398V281.2H399V281.4H400V279H401V281.9H402V281.9H403V284.2H404V277.7H405V283.2H406V281.4H407V284.7H408V308.2H407V306.3H406V306.4H405V306.7H404V306.9H403V306.4H402V309.1H401V307H400V307.3H399V309.5H398V306.2H397V309.7H396V308.6H395V310.4H394V315.2H393V317.9H392V334H391V352.3H390V389.3H389V458.2H388V589.2H387ZM582 563.9H583V430H584V361.7H585V325.8H586V307H587V295.2H588V288.5H589V283.9H590V285.1H591V284.8H592V284.4H593V280.8H594V283.4H595V283.8H596V280.4H597V283.7H598V280.6H599V284.2H600V312H599V305.3H598V310.3H597V307.8H596V308.9H595V310.7H594V314H593V310.1H592V310.9H591V307.1H590V312.6H589V317.7H588V320.3H587V332H586V349H585V389.6H584V458H583V590H582ZM617 563H618V430.8H619V364.8H620V327H621V308H622V293.1H623V288H624V286.9H625V284.4H626V284.6H627V281.5H628V282.5H629V283.8H630V285.1H631V281.5H632V285H633V283.6H634V282.7H635V283.6H636V280.3H637V282.5H638V281H639V281.4H640V281.2H641V282H642V279.8H643V284.6H644V280.4H645V284.8H646V279.3H647V282.7H648V282.6H649V278.1H650V305.7H649V309.9H648V311.5H647V310.1H646V311.2H645V306H644V310.3H643V311H642V307.7H641V309.1H640V309.9H639V310.6H638V305.3H637V305.4H636V305.1H635V307.5H634V305.4H633V309.5H632V305.1H631V305.3H630V312H629V307.4H628V309.4H627V312H626V312.1H625V310.8H624V312.1H623V319.5H622V329.1H621V349.1H620V389.1H619V460.7H618V590.6H617ZM668 562.3H669V432.1H670V361H671V324.4H672V301.6H673V295.2H674V289.8H675V285.6H676V284.7H677V281H678V284.3H679V278.7H680V280.4H681V282.9H682V284.6H683V284.2H684V282.8H685V282.1H686V280.4H687V282.9H688V308.4H687V308H686V314.3H685V307.1H684V305.7H683V305.3H682V308.5H681V310.5H680V308.8H679V307.1H678V311.8H677V311.1H676V313.8H675V317H674V318H673V328.5H672V349.4H671V388.5H670V462.3H669V594.7H668ZM861 577.7H862V462.8H863V390.7H864V346.2H865V322.4H866V308.8H867V298.1H868V290.5H869V289.3H870V313.2H869V314.2H868V319.1H867V328.3H866V343.4H865V369.3H864V413.7H863V485.2H862V608.8H861ZM874 575.4H875V456.3H876V387.3H877V350.5H878V328.6H879V315.1H880V307.6H881V303.9H882V324.1H881V329.8H880V335H879V350.2H878V369.5H877V408.4H876V480.1H875V602H874ZM894 644.1H895V601.8H896V571.7H897V547.4H898V528.7H899V513.5H900V506.8H901V499.4H902V491.9H903V488.4H904V482.8H905V484.2H906V479.5H907V479.7H908V479.4H909V476.4H910V497.7H909V498.4H908V501.7H907V506.2H906V506.2H905V505H904V510.8H903V515H902V523.2H901V527.6H900V538.8H899V554.1H898V571.3H897V594.2H896V624.6H895V669.9H894ZM950 562.3H951V431.7H952V360.9H953V323.6H954V307.6H955V295.6H956V290.4H957V285.3H958V285H959V284.5H960V285.1H961V284.5H962V282.1H963V280.3H964V283.1H965V284.1H966V281.9H967V283.2H968V305.7H967V306.4H966V306.5H965V309.8H964V309.4H963V308.6H962V309.1H961V310.4H960V308.5H959V312.6H958V309.3H957V311.9H956V321.4H955V331.5H954V352.1H953V390.9H952V458.4H951V589.3H950ZM1141 565.4H1142V431.3H1143V364.6H1144V323.9H1145V307.6H1146V293.4H1147V290H1148V286.1H1149V285.6H1150V286H1151V282.1H1152V282.4H1153V282.6H1154V282H1155V281H1156V284.4H1157V282.7H1158V285H1159V282.3H1160V282.4H1161V306.2H1160V306.5H1159V305.3H1158V305.8H1157V305.9H1156V309.4H1155V312.3H1154V307.3H1153V305.4H1152V306.3H1151V310.2H1150V309.5H1149V313.9H1148V315.7H1147V325H1146V329.3H1145V348.6H1144V388H1143V457.6H1142V590.5H1141ZM1177 504H1178V400.6H1179V341.2H1180V317.5H1181V300.5H1182V290.9H1183V286.9H1184V285.7H1185V285.4H1186V284.7H1187V280.7H1188V281.8H1189V282.3H1190V281.3H1191V283.4H1192V283.8H1193V282.1H1194V282.1H1195V283.1H1196V282.5H1197V280.1H1198V284.7H1199V284.6H1200V284H1201V284.7H1202V281.5H1203V282.1H1204V282.5H1205V281.4H1206V281.1H1207V281.6H1208V283.4H1209V281.2H1210V284.8H1211V285H1212V310.8H1211V305.9H1210V305.5H1209V310.6H1208V306.9H1207V308.6H1206V313.1H1205V307.5H1204V307.4H1203V306.4H1202V306H1201V310.2H1200V310.9H1199V312.7H1198V309.5H1197V309.1H1196V307.6H1195V312.4H1194V307.1H1193V310.5H1192V306.1H1191V312.2H1190V307.5H1189V310.8H1188V307.8H1187V305.8H1186V310.5H1185V310.4H1184V314.1H1183V316.4H1182V323.5H1181V340.9H1180V375.1H1179V424.4H1178V528H1177ZM1229 564.9H1230V432.1H1231V365.7H1232V327.5H1233V305.9H1234V292.4H1235V290.7H1236V285H1237V283.1H1238V283.1H1239V283.8H1240V282.7H1241V281.1H1242V283H1243V284.6H1244V282.9H1245V283.1H1246V285H1247V282.2H1248V307.7H1247V305.7H1246V306.2H1245V305.8H1244V308.3H1243V309.5H1242V310.7H1241V312.2H1240V311.4H1239V306.5H1238V310.2H1237V310.6H1236V316H1235V317.8H1234V332H1233V352.7H1232V389.5H1231V458.3H1230V589.8H1229Z"/>
<path fill="#2222f6" d="M3 683.9H4V682.8H5V683.1H6V681.7H7V683.7H8V681.4H9V682.3H10V683H11V683.6H12V680.9H13V681.5H14V684H15V682.4H16V682.4H17V682.1H18V683.7H19V682.3H20V684H21V683.4H22V682.1H23V683.5H24V683.4H25V680.5H26V683.9H27V684H28V682.5H29V682.9H30V683.8H31V683.4H32V683.2H33V683.6H34V683.4H35V681.7H36V681.8H37V684H38V680.7H39V681.7H40V682.8H41V681.3H42V700.5H41V702.2H40V704.9H39V704.7H38V701.9H37V700H36V700.2H35V700.5H34V700.6H33V703.6H32V701.8H31V704.9H30V700.2H29V701.1H28V703.4H27V702.4H26V703.7H25V700.4H24V700.7H23V702.3H22V700.1H21V701.8H20V701.6H19V702.5H18V701.2H17V700.7H16V703.4H15V705.6H14V704.4H13V702.2H12V703.8H11V701.8H10V700.4H9V704.1H8V700.2H7V702.2H6V702.4H5V701.1H4V701H3ZM62 672.2H63V675.8H64V675.6H65V677H66V677.9H67V678H68V680.4H69V680.3H70V682.5H71V682.2H72V682.7H73V681.2H74V681.7H75V681.8H76V682.4H77V700.4H76V700.7H75V701.5H74V699.8H73V702.8H72V702.9H71V700.1H70V699.5H69V701H68V701.7H67V699.4H66V703.3H65V697.2H64V699.3H63V696.8H62ZM114 672.8H115V675.3H116V677.5H117V678H118V678.9H119V678.7H120V680.7H121V679.8H122V682.8H123V681.3H124V681.7H125V680.8H126V682.7H127V681.7H128V683.7H129V704.5H128V703.6H127V703.6H126V703.7H125V702.6H124V699.9H123V700.9H122V699.3H121V700.2H120V699.8H119V701.1H118V699.4H117V698H116V698.9H115V699.3H114ZM149 672.9H150V674.8H151V676H152V677H153V678.4H154V680.9H155V682H156V681.7H157V680.7H158V681H159V683.2H160V681.1H161V680H162V680.4H163V681.5H164V683.4H165V681.7H166V682.4H167V682.7H168V682.6H169V682.6H170V684H171V682.7H172V681.1H173V682.9H174V682.7H175V680.6H176V680.1H177V684H178V681.1H179V683.6H180V682.8H181V683.4H182V681.2H183V680.3H184V683.2H185V680.8H186V681.9H187V683.1H188V679.8H189V683.2H190V680.7H191V683.2H192V682.2H193V683.8H194V681.4H195V680H196V681.8H197V681.5H198V683.9H199V681.9H200V681.7H201V683.4H202V681.3H203V682.2H204V681.6H205V682.5H206V683.8H207V680.2H208V680.9H209V681.9H210V682.5H211V683H212V683.1H213V681.4H214V680.8H215V682.7H216V681.5H217V682.4H218V683.6H219V682.1H220V682.8H221V683.8H222V682.1H223V683.7H224V683.5H225V682.4H226V683.2H227V681.3H228V682.6H229V683.4H230V682.9H231V683.8H232V681H233V683.2H234V681.4H235V683.8H236V682H237V682.3H238V682H239V683H240V681.4H241V682.9H242V683.8H243V682.4H244V683.1H245V684H246V681.7H247V680.3H248V683H249V683.7H250V680.3H251V683.6H252V683.1H253V681.5H254V682.4H255V682.9H256V682.6H257V681.1H258V683.3H259V683.7H260V682.6H261V682.5H262V682.9H263V681.1H264V683.4H265V683.3H266V680.1H267V683H268V682.6H269V682.3H270V683.2H271V681.7H272V683.9H273V682.3H274V681.6H275V681.6H276V683.3H277V681.7H278V682.1H279V681.8H280V682.3H281V680.9H282V682.3H283V681.8H284V683.6H285V684H286V681.5H287V682.1H288V683.6H289V683.4H290V683.3H291V682.6H292V681.1H293V679.5H294V684H295V683.2H296V682H297V682.7H298V681.5H299V683.6H300V682.8H301V681.9H302V683H303V681.3H304V682.5H305V683.7H306V682.7H307V682.1H308V683.7H309V683.9H310V683.3H311V681.2H312V679.9H313V682.2H314V683.6H315V680.6H316V682.6H317V679.9H318V681.8H319V683.3H320V682.9H321V683.6H322V702.6H321V702.8H320V700.9H319V702.9H318V701.7H317V703.4H316V700.2H315V705.1H314V700.5H313V703.1H312V701.5H311V700.4H310V701.2H309V700.4H308V700.3H307V700.3H306V700.3H305V700.2H304V703.8H303V702.7H302V704.6H301V706.1H300V704.7H299V705.7H298V702.8H297V704.3H296V700.2H295V704.2H294V701.2H293V700H292V701H291V701.4H290V700.7H289V700H288V700.1H287V702.3H286V703.9H285V705.4H284V702.6H283V700H282V701.3H281V703.1H280V703.7H279V700.2H278V703H277V703.4H276V702.9H275V704.7H274V700.1H273V700.2H272V703.1H271V700H270V701.5H269V700.3H268V705H267V701.8H266V701.3H265V701.8H264V701.6H263V704H262V701.1H261V703.4H260V701.4H259V702.4H258V704.5H257V700.4H256V701.9H255V702.3H254V703H253V700.5H252V702.5H251V702.2H250V701.6H249V703.6H248V702.2H247V701.5H246V702.9H245V701.2H244V701.8H243V701.1H242V701H241V701.9H240V701.1H239V701.9H238V702.6H237V704.8H236V703H235V703.7H234V702.4H233V701.4H232V700.5H231V703.3H230V700.2H229V703.9H228V701.5H227V704.5H226V702.3H225V703.4H224V703.4H223V703.4H222V703.1H221V700.9H220V700.8H219V704.7H218V700.8H217V705.2H216V700.2H215V702.1H214V701.2H213V702.5H212V702H211V703H210V700.7H209V701.3H208V704H207V701H206V701.1H205V701.1H204V701.1H203V703.5H202V705.9H201V701.6H200V701.4H199V703.4H198V702.4H197V702.1H196V700.9H195V703.4H194V701.9H193V700.5H192V702.3H191V701.5H190V702.9H189V702.4H188V702.3H187V701.6H186V703H185V703.6H184V702.8H183V705.9H182V700.2H181V700.9H180V701.2H179V703H178V702.2H177V700.9H176V705.4H175V702H174V704H173V702.1H172V703.6H171V700.8H170V701.6H169V701.7H168V703.4H167V700H166V700.3H165V701.9H164V702.2H163V703.9H162V702.7H161V700.1H160V700.9H159V701.6H158V701.2H157V700.4H156V701.4H155V701.9H154V701H153V700.5H152V697.3H151V700.2H150V697.9H149ZM342 671.7H343V673.9H344V678.1H345V677.9H346V678.6H347V680.6H348V681.5H349V681.5H350V680.5H351V681.4H352V681H353V682.2H354V683.2H355V681.6H356V702.3H355V699.9H354V701.4H353V701.4H352V703.6H351V701.3H350V701.5H349V701.5H348V699.4H347V702.5H346V701.9H345V700.6H344V697.3H343V695.6H342ZM395 670.9H396V675.2H397V676.7H398V678.6H399V678.7H400V680H401V680.8H402V682.5H403V681H404V680.2H405V681.5H406V682.8H407V681.8H408V683.7H409V682.4H410V700H409V703H408V702.6H407V700.7H406V703.4H405V702.9H404V701.4H403V703.2H402V703.3H401V698.8H400V701.5H399V699.4H398V697.6H397V698.2H396V695.9H395ZM430 671.6H431V672.7H432V675.3H433V677.1H434V678.9H435V678.4H436V681.3H437V679.5H438V682.2H439V682.5H440V683.1H441V682.1H442V683.6H443V681.8H444V680.4H445V680.9H446V681H447V680.1H448V683.2H449V681.2H450V680H451V684H452V680.6H453V681.3H454V680.7H455V683.9H456V683.2H457V681H458V683H459V681.1H460V681.8H461V681.1H462V682.3H463V683.1H464V680.1H465V684H466V681H467V682.3H468V682.6H469V682.7H470V682.4H471V681.6H472V682.4H473V682.5H474V684H475V683.6H476V680.9H477V681.8H478V683.1H479V683.4H480V682.2H481V682.2H482V681.6H483V682.4H484V680H485V682.3H486V683.8H487V682H488V682.9H489V682.5H490V683.7H491V682.7H492V681H493V682.2H494V680.8H495V681H496V681.3H497V682.4H498V683.7H499V680.5H500V682.9H501V682.4H502V682.2H503V684H504V684H505V680.9H506V683.1H507V683.3H508V681.3H509V683.4H510V681.5H511V682.9H512V680.4H513V683.2H514V683.1H515V681H516V681.3H517V682.1H518V681.7H519V682.4H520V683.5H521V682.1H522V681.6H523V681.4H524V684H525V683.9H526V681.8H527V681.8H528V683.9H529V681.7H530V683.6H531V683.8H532V684H533V683.1H534V681.8H535V681.1H536V681.3H537V683.9H538V683.6H539V683.3H540V683.9H541V683.8H542V682.9H543V682.8H544V683.3H545V682H546V681.5H547V681.6H548V682.6H549V682.5H550V683.3H551V682.1H552V681.2H553V681.7H554V683.6H555V682.9H556V681.6H557V680.8H558V682.3H559V682.7H560V681.4H561V682.4H562V681.9H563V684H564V681.6H565V683.6H566V682.9H567V683.3H568V683.2H569V683.6H570V683.1H571V681.9H572V682H573V682.4H574V681.5H575V680.5H576V682.1H577V682.5H578V682.4H579V683.2H580V681.7H581V680H582V683.7H583V683.7H584V681.7H585V683.2H586V683.5H587V681.6H588V683.9H589V683.2H590V682.4H591V682.8H592V681H593V683.5H594V683.9H595V681.5H596V682.8H597V682.6H598V682.6H599V683.9H600V683.6H601V682.8H602V703.7H601V701.2H600V703.1H599V702.8H598V702.5H597V703.8H596V704.1H595V703.1H594V700.5H593V701.5H592V702.5H591V703.9H590V704.5H589V701.5H588V701.3H587V700H586V701.9H585V701.9H584V702.5H583V701.6H582V701.6H581V704.7H580V700.8H579V701.5H578V700.5H577V701H576V701.1H575V701.3H574V703.8H573V701.9H572V703.2H571V701.7H570V700.1H569V701H568V700.7H567V703.1H566V701.7H565V704.4H564V703.9H563V702.8H562V705H561V700.9H560V701.4H559V701.8H558V701.9H557V703.3H556V704.4H555V702H554V703.6H553V701.6H552V703.2H551V704H550V700.6H549V701.6H548V701.3H547V700.3H546V703.7H545V703.7H544V704.8H543V703.1H542V704.7H541V703.8H540V702.4H539V701.6H538V702.7H537V700H536V700.1H535V701.2H534V700.5H533V700.7H532V700.1H531V703.8H530V703.7H529V703.1H528V703.3H527V702.6H526V701.6H525V703.8H524V705.2H523V702.7H522V704H521V700.5H520V702H519V703.3H518V704.5H517V705.2H516V703.4H515V703.5H514V702H513V702.1H512V702.5H511V700.6H510V701.7H509V703.8H508V700.5H507V703.2H506V701.2H505V703.9H504V700.4H503V700.8H502V703.7H501V700.8H500V703H499V702.7H498V701.6H497V700.5H496V701.5H495V700.6H494V703.5H493V702.1H492V700H491V703.4H490V703.2H489V702.9H488V702.4H487V702.1H486V701.8H485V701.8H484V701.4H483V700.7H482V703.7H481V700H480V700.4H479V701.6H478V703.6H477V701.8H476V701.9H475V702.6H474V703.1H473V702.2H472V703.4H471V703.6H470V702.2H469V700.1H468V703.3H467V703.3H466V701.3H465V703.7H464V704.7H463V700.7H462V702.9H461V702.2H460V704.8H459V701.7H458V703.2H457V700.3H456V701.7H455V703.1H454V702.5H453V700.6H452V702.9H451V701.4H450V702.4H449V700.6H448V701.9H447V703.2H446V700H445V702H444V702.1H443V700.2H442V702H441V701.5H440V702.1H439V700.5H438V699.3H437V699.1H436V702.2H435V698.5H434V698.3H433V699.1H432V700.5H431V696.2H430ZM622 669.9H623V673.4H624V676H625V678H626V680.4H627V679.6H628V680.5H629V680.8H630V680.1H631V679.4H632V683.2H633V683.4H634V680.8H635V681.3H636V683.7H637V679.7H638V702.1H637V701.1H636V701.5H635V703.3H634V702.6H633V702.1H632V703H631V700.8H630V699.7H629V699.1H628V703.1H627V702.1H626V700.5H625V699.4H624V698.9H623V696.6H622ZM676 672.7H677V675.1H678V673.9H679V678.7H680V680.4H681V680.6H682V679.6H683V680.9H684V681.9H685V682.7H686V682H687V682.4H688V681H689V683.5H690V699.9H689V701.1H688V702.5H687V700.9H686V703.5H685V701.1H684V700.2H683V699.1H682V699.7H681V699H680V698.5H679V697.6H678V697H677V695.2H676ZM710 671.7H711V674.1H712V677.4H713V677.9H714V679.8H715V680.6H716V681.8H717V679.7H718V681.1H719V681.7H720V681.8H721V680.7H722V680.6H723V681.3H724V683H725V683.2H726V682.1H727V681.1H728V681.5H729V681.4H730V681.1H731V682.5H732V683H733V683.8H734V681.9H735V682.6H736V683.5H737V683.5H738V683.7H739V682.7H740V683.9H741V682.8H742V683.1H743V680.7H744V682.7H745V682H746V681.2H747V682.7H748V681.3H749V682.6H750V681.8H751V681.6H752V682.5H753V682.4H754V683.8H755V683.7H756V682.3H757V681H758V681.1H759V682.9H760V684H761V682.2H762V683.9H763V683.6H764V683.7H765V682.5H766V680H767V683.2H768V681.7H769V680.9H770V681.1H771V683.3H772V682.3H773V681.8H774V683.2H775V682.3H776V681.5H777V681.5H778V683.9H779V682.3H780V682.3H781V682.5H782V681.2H783V682.7H784V683.1H785V683.9H786V681.3H787V682.7H788V682.9H789V681.5H790V683.7H791V681.8H792V681H793V682.8H794V683H795V681.5H796V682.2H797V682.2H798V682.3H799V684H800V683.5H801V681.1H802V682.1H803V682.3H804V682.3H805V681.4H806V683.6H807V683.9H808V681.4H809V683.4H810V682.5H811V682.2H812V682.2H813V683.9H814V683.5H815V681.5H816V682H817V683.5H818V683.2H819V682.8H820V683.8H821V683.8H822V681.6H823V683.3H824V684H825V682.3H826V683.8H827V683.4H828V683.9H829V683.3H830V682.9H831V680H832V681.4H833V682.2H834V682.5H835V683.4H836V682.6H837V683.9H838V682.8H839V683.6H840V683.2H841V682H842V680.8H843V682.7H844V683.4H845V682.9H846V683.9H847V683.5H848V683.1H849V681.4H850V681.5H851V683.5H852V684H853V681.5H854V682.9H855V683.5H856V681H857V681.5H858V682.1H859V680H860V683.6H861V682.2H862V681.4H863V681H864V682.6H865V682.3H866V682.9H867V682.1H868V681.6H869V682.2H870V682.6H871V684H872V680.3H873V682.4H874V684H875V681.8H876V683.6H877V683.2H878V681.2H879V682.2H880V682.1H881V683.6H882V681H883V683.4H884V700.1H883V702.9H882V702.7H881V700.8H880V702.4H879V701.5H878V703.4H877V700.2H876V704.2H875V704H874V701.1H873V700.6H872V700.8H871V700.8H870V703.4H869V700.4H868V702.5H867V704.6H866V702.9H865V703.4H864V700.6H863V701.1H862V701.7H861V704.1H860V702.4H859V704.4H858V703.5H857V703.9H856V701.4H855V702.1H854V701.4H853V701.1H852V700.4H851V702.9H850V700H849V703.2H848V700.7H847V702.4H846V700.5H845V702.9H844V703.8H843V703.4H842V700.5H841V702.1H840V704.2H839V702.8H838V701.9H837V702.7H836V700.7H835V701.7H834V703.3H833V700.4H832V701.9H831V701.3H830V702.4H829V701.6H828V703H827V700.8H826V703.9H825V702.6H824V702.4H823V700.3H822V703.8H821V703.3H820V702.7H819V701.2H818V701.4H817V703.4H816V703.6H815V700.8H814V700.4H813V700.2H812V702.8H811V702.9H810V702.7H809V702.4H808V700.3H807V702.2H806V701.1H805V705.3H804V700.1H803V702.7H802V703.2H801V700H800V700.5H799V703.6H798V700.7H797V701.2H796V704.8H795V701.7H794V701.1H793V702.5H792V703.4H791V700.5H790V704.2H789V700H788V700.6H787V702.5H786V701.9H785V704.4H784V703.4H783V701.6H782V703.6H781V701.6H780V702.8H779V702.1H778V702.3H777V703.4H776V704.4H775V702.6H774V703.4H773V702H772V702.3H771V701.1H770V702.3H769V701.8H768V700.2H767V701.9H766V702.1H765V702.6H764V700.6H763V702.8H762V705.4H761V700H760V702.7H759V702.3H758V700.1H757V705H756V704.2H755V701.3H754V702.5H753V701.8H752V701.2H751V700H750V702H749V701.5H748V701.9H747V702.3H746V700.1H745V701H744V700.2H743V701.7H742V704.1H741V700.9H740V702.5H739V700.6H738V701.6H737V702.8H736V703.9H735V701.5H734V703H733V701H732V700.4H731V700.4H730V700.9H729V700H728V700.1H727V703.7H726V703.1H725V701.2H724V699.9H723V702H722V701.3H721V701.7H720V699.9H719V705.2H718V703H717V700.3H716V700.2H715V701.1H714V698.6H713V698.7H712V699.3H711V697.2H710ZM893 672.4H894V675.7H895V677.1H896V698.6H895V699.8H894V698.3H893ZM902 671.8H903V675.4H904V676.7H905V676.7H906V678.7H907V681.2H908V680.2H909V681H910V682.8H911V681.6H912V679.4H913V682.1H914V682.1H915V682.5H916V680.8H917V703.1H916V702.8H915V701.3H914V700H913V701.2H912V703.3H911V700.6H910V699.4H909V702.7H908V699.9H907V702.9H906V702.8H905V697.7H904V700.7H903V697.9H902ZM934 671.1H935V675.8H936V676.5H937V679.5H938V678.2H939V680.6H940V678.9H941V682.4H942V681.6H943V681.2H944V682.8H945V679.9H946V683.5H947V682.8H948V682.1H949V682.5H950V681H951V681.6H952V683.9H953V681.2H954V681.2H955V682H956V682.3H957V682H958V681.9H959V682.5H960V681.7H961V683H962V683.3H963V680.2H964V682.4H965V681.9H966V681H967V683.4H968V680H969V682.4H970V682.8H971V702.2H970V702.5H969V701.1H968V700.1H967V701.8H966V700.5H965V702.3H964V704.9H963V701.5H962V703.1H961V703.7H960V705.5H959V700.8H958V702.9H957V702.7H956V701.6H955V700.1H954V701.8H953V700.9H952V702.6H951V702.3H950V700.9H949V701.4H948V701.5H947V704.4H946V701.3H945V701.8H944V703.8H943V701.4H942V700.2H941V702.5H940V699.5H939V700.8H938V700.6H937V697.4H936V697.8H935V698.7H934ZM991 669.4H992V675.7H993V676.8H994V678.2H995V680.1H996V679.3H997V678.8H998V681.1H999V680.1H1000V682.7H1001V681.2H1002V680.9H1003V683.5H1004V683.6H1005V683.1H1006V681H1007V683H1008V683.7H1009V681.4H1010V682.1H1011V682.2H1012V683.9H1013V684H1014V681.8H1015V684H1016V681H1017V683.3H1018V681.8H1019V681.5H1020V683.1H1021V683.4H1022V681.1H1023V681.6H1024V683.1H1025V681.1H1026V682.2H1027V681.3H1028V682.8H1029V684H1030V681.5H1031V683.4H1032V684H1033V681.9H1034V682.3H1035V683.9H1036V682H1037V682.7H1038V682.9H1039V682.9H1040V682H1041V681.9H1042V682.3H1043V681.4H1044V681.9H1045V683.3H1046V681.5H1047V679.7H1048V682.6H1049V682.1H1050V682H1051V683.8H1052V681.5H1053V683.6H1054V682.8H1055V682.9H1056V681.1H1057V681.1H1058V683.7H1059V683.2H1060V682.7H1061V683.4H1062V683.3H1063V682.9H1064V681H1065V681.4H1066V682.4H1067V681.4H1068V681.1H1069V682.1H1070V683.3H1071V683.3H1072V683.1H1073V683.9H1074V681.8H1075V681H1076V681.5H1077V682.4H1078V681.6H1079V683H1080V683.1H1081V681.6H1082V682H1083V683.3H1084V682H1085V684H1086V682.7H1087V682.2H1088V679.6H1089V682.5H1090V681.4H1091V681.4H1092V683.1H1093V680.2H1094V683.3H1095V682.9H1096V680.7H1097V683.2H1098V683.3H1099V682.7H1100V682H1101V680.6H1102V681.5H1103V683.3H1104V681.5H1105V682H1106V682.6H1107V682.3H1108V683.2H1109V683.4H1110V682.3H1111V683.3H1112V682.5H1113V681H1114V683.5H1115V681H1116V683.7H1117V681.8H1118V683.4H1119V681.4H1120V681.8H1121V682.2H1122V680.5H1123V683.7H1124V683.4H1125V684H1126V682.8H1127V682.1H1128V682.5H1129V684H1130V682.1H1131V682.3H1132V681.7H1133V682.2H1134V681.8H1135V681.1H1136V683.4H1137V682.6H1138V681.7H1139V680.8H1140V682.7H1141V684H1142V681.5H1143V682.7H1144V682H1145V680.8H1146V683.8H1147V683.4H1148V683.7H1149V683H1150V684H1151V683.5H1152V683.8H1153V683.8H1154V683.8H1155V681.5H1156V683.9H1157V683.9H1158V682H1159V680.2H1160V681.4H1161V681.6H1162V682.8H1163V683.2H1164V702.7H1163V700.8H1162V703.9H1161V702.1H1160V700.7H1159V701.2H1158V702.8H1157V700.1H1156V703.9H1155V701.2H1154V701.8H1153V703.6H1152V702.4H1151V703.9H1150V703H1149V700.1H1148V700.2H1147V701.2H1146V702.6H1145V700.4H1144V702H1143V703.5H1142V702.3H1141V702.2H1140V703H1139V705.3H1138V702.7H1137V704.4H1136V700.7H1135V701.5H1134V700.8H1133V702.5H1132V703.7H1131V702.7H1130V701.6H1129V700.2H1128V700.9H1127V703H1126V702.7H1125V701.7H1124V703.6H1123V700.1H1122V701.6H1121V700.4H1120V704.5H1119V704H1118V703.9H1117V701.4H1116V703.7H1115V700.1H1114V702.4H1113V700.3H1112V700.3H1111V700.2H1110V700.5H1109V700.2H1108V703.7H1107V701.7H1106V700.4H1105V703.1H1104V702.7H1103V700.1H1102V701.6H1101V702H1100V702.4H1099V702.1H1098V703.5H1097V701.4H1096V702.7H1095V703.2H1094V702.1H1093V704.5H1092V702.5H1091V701.1H1090V702.7H1089V701H1088V702.8H1087V700.4H1086V704.4H1085V702H1084V700H1083V701.4H1082V704.6H1081V700.8H1080V702.5H1079V700.3H1078V702.4H1077V702.7H1076V700.6H1075V705.1H1074V700.8H1073V701.9H1072V703.4H1071V701H1070V701.9H1069V701.2H1068V700.5H1067V701H1066V700.1H1065V702H1064V702.9H1063V703.1H1062V702.1H1061V700.2H1060V701H1059V703.3H1058V703.8H1057V701.1H1056V703.5H1055V701.6H1054V700.2H1053V702.3H1052V701.1H1051V701.1H1050V701.3H1049V703.4H1048V705.6H1047V701.2H1046V701.2H1045V700.8H1044V703.3H1043V700.6H1042V701.2H1041V700.7H1040V702.6H1039V702.7H1038V701.4H1037V700.5H1036V701.8H1035V700.4H1034V700.1H1033V700.1H1032V701.7H1031V702.1H1030V701.3H1029V703.3H1028V702.7H1027V700.8H1026V701.8H1025V702H1024V703.5H1023V704.4H1022V700.8H1021V701.4H1020V702.5H1019V703.5H1018V700.1H1017V700.6H1016V701.5H1015V701.8H1014V701.3H1013V702.9H1012V704.8H1011V703.7H1010V700.2H1009V700.6H1008V701.7H1007V702.2H1006V700H1005V700.7H1004V700.8H1003V704.6H1002V702.6H1001V700.9H1000V702.2H999V699.4H998V702H997V699.8H996V698.3H995V701H994V701.4H993V696.8H992V697.8H991ZM1184 672.1H1185V675.8H1186V677.6H1187V679H1188V680.5H1189V681.1H1190V681.4H1191V681.3H1192V681.7H1193V681.4H1194V682.1H1195V683.4H1196V682.1H1197V683.2H1198V703.9H1197V702.6H1196V702.9H1195V700.8H1194V703.1H1193V700.7H1192V699.4H1191V702.2H1190V700.2H1189V698.4H1188V698.4H1187V698.1H1186V699.6H1185V697.2H1184ZM1236 672H1237V675.7H1238V674.6H1239V678.3H1240V680.1H1241V679.8H1242V681.7H1243V681.9H1244V679.3H1245V680.9H1246V683.4H1247V681.1H1248V682.2H1249V681.4H1250V700.8H1249V702.8H1248V702.9H1247V699.7H1246V703.5H1245V701.8H1244V701.8H1243V699.3H1242V700.3H1241V698.4H1240V700.3H1239V697.3H1238V696.9H1237V696.9H1236ZM42 583.8H43V465.7H44V402.3H45V366.9H46V347.3H47V338.8H48V333.6H49V328H50V327.7H51V328.8H52V326.4H53V324.5H54V324.3H55V325.1H56V325.2H57V326.1H58V323.6H59V350.3H58V353.4H57V354.9H56V350.4H55V352H54V356.7H53V353.6H52V351.6H51V352.5H50V357.4H49V360.6H48V363H47V374.3H46V394H45V427.5H44V487.2H43V609.4H42ZM77 557.4H78V446.7H79V393.6H80V362.6H81V345.4H82V332.6H83V328.5H84V328.8H85V328.5H86V327.3H87V326.2H88V325.9H89V325.7H90V324.7H91V326H92V324.6H93V322.3H94V326.1H95V324H96V326.9H97V324.5H98V324.8H99V324.7H100V324.7H101V325.7H102V323.4H103V325.7H104V327.8H105V321.2H106V327.3H107V327.1H108V322H109V325.1H110V325.8H111V326.9H112V352.6H111V353.4H110V351.2H109V350.3H108V354.7H107V350.3H106V352.2H105V355H104V352.5H103V353H102V355.8H101V354.4H100V354.5H99V351.9H98V352.6H97V355.1H96V351.4H95V350.8H94V353.2H93V354H92V351.3H91V350.4H90V354.3H89V354H88V351.5H87V353.6H86V352.8H85V353.4H84V359.1H83V360.4H82V372H81V386.7H80V417.8H79V473.2H78V579H77ZM129 539.8H130V442.7H131V387.6H132V361.1H133V342.7H134V336H135V330.3H136V329.9H137V325.6H138V328.5H139V324.5H140V325.9H141V325.2H142V323.1H143V323.9H144V327.7H145V325H146V353H145V353.2H144V351.2H143V350.7H142V352.5H141V352.7H140V351.7H139V351.1H138V353.8H137V356.9H136V361.1H135V363.8H134V371.3H133V385.6H132V413.9H131V467.9H130V566.9H129ZM322 518.5H323V427.9H324V379.8H325V356.7H326V339.8H327V330H328V330.6H329V327.5H330V324.7H331V326.6H332V327H333V321.9H334V323.1H335V327.3H336V327.5H337V325H338V327.8H339V351.1H338V352.9H337V353.8H336V351.5H335V354H334V357.6H333V350.5H332V355.5H331V355.7H330V357H329V355.2H328V363.8H327V368.8H326V383.2H325V406.1H324V457.1H323V541H322ZM356 587.2H357V463.6H358V395.1H359V366.4H360V345H361V336.2H362V333.1H363V329H364V329.2H365V327.7H366V324.7H367V328.2H368V325.6H369V327.5H370V323.2H371V323.5H372V326.8H373V326.6H374V326.2H375V325.9H376V325.8H377V322.3H378V325.6H379V327H380V323.3H381V325.8H382V325.3H383V325.1H384V326.7H385V326.5H386V325H387V327.1H388V326.5H389V326H390V326.6H391V324.3H392V352H391V350.7H390V352.1H389V354.6H388V351.6H387V351.5H386V354.6H385V350.8H384V351.3H383V355.7H382V355.8H381V351.5H380V353.5H379V351.7H378V351.9H377V355.1H376V354.2H375V351.6H374V350.6H373V350.1H372V354.7H371V351.5H370V353.3H369V351.7H368V352.9H367V355H366V353.3H365V353.5H364V356H363V361H362V363.1H361V374.8H360V391.5H359V424.9H358V487.8H357V610.3H356ZM410 584.6H411V467.4H412V399.7H413V365.6H414V347.8H415V335H416V332.1H417V328.6H418V327.6H419V325.9H420V327.1H421V326.3H422V323.9H423V326.7H424V323.5H425V325.9H426V325.7H427V324.9H428V354.1H427V350.1H426V352.4H425V353.2H424V354.3H423V356.2H422V350.9H421V354.2H420V352.2H419V352.7H418V357.9H417V361H416V363.1H415V375.4H414V393.7H413V424.2H412V490.8H411V609.3H410ZM602 679H603V516.6H604V427H605V379.9H606V356.1H607V340.1H608V332.2H609V327.9H610V329.9H611V325.4H612V328.1H613V325.3H614V324.9H615V326.5H616V326H617V327.9H618V324.5H619V324.5H620V353H619V357.6H618V351.7H617V355.1H616V350.3H615V351.3H614V351.2H613V355.6H612V351.7H611V354.8H610V356.9H609V361.2H608V367.8H607V379.6H606V407.3H605V455H604V539.3H603V703.1H602ZM638 583.8H639V466H640V399.1H641V365.1H642V342.8H643V336H644V329.7H645V328.9H646V327.8H647V324.6H648V327.4H649V325.3H650V326.4H651V327.5H652V327.4H653V325.6H654V326.1H655V325H656V327.8H657V326.4H658V326.7H659V323.2H660V326.3H661V326H662V323.9H663V327.6H664V326.9H665V324.5H666V326.1H667V325.4H668V327.7H669V323.6H670V325.9H671V326.9H672V324.8H673V326.4H674V350.2H673V352.5H672V353H671V351.9H670V351.5H669V352.3H668V353H667V351.4H666V350.7H665V355.8H664V353.9H663V352.1H662V354.4H661V353.2H660V350.2H659V350.4H658V352.7H657V352H656V354.8H655V350.6H654V351.3H653V351.9H652V353.5H651V351.4H650V354H649V350.9H648V355.5H647V352.8H646V357H645V359H644V365.9H643V374.9H642V390.4H641V423.4H640V487.2H639V609.6H638ZM690 584.1H691V463.9H692V402.6H693V362.5H694V347.7H695V335.7H696V331.1H697V330H698V326.9H699V328.2H700V326.6H701V323.9H702V327.1H703V327.9H704V328H705V327.5H706V327.5H707V327.2H708V353.5H707V354.8H706V352.2H705V350.9H704V357.1H703V351.2H702V351H701V352.4H700V352.8H699V357.3H698V358.9H697V356.6H696V362.8H695V375H694V392.6H693V426.6H692V487.3H691V610.3H690ZM884 595.5H885V476.3H886V411.2H887V373.9H888V350.5H889V342.2H890V334.8H891V329.3H892V354.5H891V356.8H890V362.8H889V374.9H888V395.4H887V435.9H886V501.1H885V613.4H884ZM896 563.3H897V435.3H898V379.3H899V356.3H900V347.5H901V372.3H900V379.8H899V407.8H898V458H897V585.7H896ZM917 655.2H918V615.8H919V589.9H920V567.9H921V552.5H922V539.6H923V532.3H924V523.6H925V517.9H926V513.1H927V513.9H928V513.2H929V508.8H930V508.6H931V507.7H932V533.1H931V531.9H930V535.5H929V537.3H928V540.5H927V539.1H926V545.6H925V547.4H924V553.7H923V562.8H922V574.5H921V590.3H920V608.4H919V636.9H918V677.9H917ZM971 588.2H972V467.1H973V398.9H974V365.6H975V345.6H976V339.3H977V333.8H978V330.8H979V327H980V326.6H981V324.1H982V325.7H983V325.5H984V323.4H985V323.5H986V324.9H987V323.9H988V353.1H987V350.3H986V350.9H985V352.8H984V355.4H983V353.3H982V353H981V355.2H980V354.4H979V356.4H978V358.7H977V365.2H976V371.9H975V395.2H974V426.1H973V487.4H972V606.1H971ZM1164 516.6H1165V425.1H1166V381.1H1167V352.9H1168V340.4H1169V334.4H1170V330H1171V329.9H1172V325.9H1173V323.5H1174V326.1H1175V327.5H1176V325.3H1177V327.1H1178V323.8H1179V325H1180V325.4H1181V350.5H1180V354.9H1179V350.1H1178V350.7H1177V350.6H1176V350.7H1175V356.9H1174V351.5H1173V351.4H1172V353.1H1171V355.5H1170V358.3H1169V368H1168V384.3H1167V407.6H1166V453.1H1165V537.5H1164ZM1198 588.2H1199V467H1200V401.8H1201V367.1H1202V346.1H1203V334.5H1204V329.7H1205V330H1206V325H1207V328.1H1208V328.5H1209V324.7H1210V328.1H1211V324.4H1212V327.5H1213V322.4H1214V322.3H1215V325.6H1216V325.6H1217V327.8H1218V323.3H1219V326.4H1220V323.6H1221V327.5H1222V324.4H1223V323.4H1224V323.2H1225V327.1H1226V324.8H1227V327H1228V324.5H1229V324.9H1230V327.3H1231V328H1232V323.2H1233V327.4H1234V354.9H1233V351.7H1232V352.7H1231V352.9H1230V352.8H1229V353.9H1228V352.8H1227V351.3H1226V350.9H1225V356.5H1224V355.6H1223V351.2H1222V350.6H1221V353.7H1220V354.1H1219V354H1218V351.1H1217V352.1H1216V352.5H1215V355H1214V353.5H1213V352.3H1212V351.6H1211V350.5H1210V354H1209V351.6H1208V354.5H1207V352.7H1206V354.9H1205V358.6H1204V363.2H1203V372.7H1202V392.9H1201V425.6H1200V488.7H1199V606.7H1198Z"/>
<path fill="none" stroke="#f050c0" stroke-width="1" d="M49.5 618.4V638M52.5 620.4V638M55.5 629.5V638M58.5 629.4V638M61.5 630.9V638M64.5 633.6V638M50.5 653V661.9M52.5 653V663.1M54.5 653V663M56.5 653V659.6M58.5 653V658.5M60.5 653V658.7M62.5 653V658.5M189.5 618.8V638M192.5 621.9V638M195.5 625.3V638M198.5 630.6V638M201.5 631.8V638M204.5 633.7V638M190.5 653V662.1M192.5 653V659.7M194.5 653V661.1M196.5 653V658.5M198.5 653V660.7M202.5 653V658.6M329.5 612.5V638M332.5 618.9V638M335.5 626.8V638M338.5 630V638M341.5 633.5V638M330.5 653V664.7M332.5 653V662.8M334.5 653V659.3M336.5 653V659.6M338.5 653V658.6M470.5 614.6V638M473.5 623V638M476.5 626.3V638M479.5 631.8V638M482.5 632.5V638M485.5 632.9V638M471.5 653V665.8M473.5 653V660.4M475.5 653V661.7M477.5 653V658.9M479.5 653V658.3M481.5 653V659.1M610.5 617.6V638M613.5 622.6V638M616.5 629.5V638M619.5 631V638M622.5 633V638M611.5 653V666.2M613.5 653V662.1M615.5 653V661.3M617.5 653V661.1M619.5 653V659M621.5 653V658.1M623.5 653V658M750.5 616V638M753.5 618.8V638M756.5 628.7V638M759.5 630.5V638M762.5 633.7V638M751.5 653V664.8M753.5 653V663.2M755.5 653V658.9M757.5 653V661.7M759.5 653V660.3M761.5 653V659.6M763.5 653V658.4M891.5 611.1V638M894.5 621.6V638M897.5 626.7V638M900.5 629.5V638M903.5 631.8V638M906.5 633.7V638M892.5 653V664M894.5 653V659.3M896.5 653V660.8M898.5 653V661.1M900.5 653V660.7M1031.5 620.9V638M1034.5 620.4V638M1037.5 627.2V638M1040.5 631.4V638M1043.5 631.3V638M1032.5 653V661.5M1034.5 653V661M1036.5 653V658.8M1038.5 653V658.7M1040.5 653V658M1042.5 653V658.7M1171.5 620.9V638M1174.5 619.7V638M1177.5 625.2V638M1180.5 629.6V638M1183.5 632.5V638M1186.5 633.8V638M1172.5 653V665.3M1174.5 653V662M1176.5 653V659.9M1178.5 653V660M1180.5 653V659.6M1184.5 653V658.6M47.5 211V712M118.5 131V638M119.5 176V230M120.5 150V225M121.5 211V236.9M122.5 171.5V191M123.5 211V230.4M124.5 177.5V191M125.5 211V221.4M126.5 180V191M127.5 211V222M128.5 185V191M129.5 211V216.9M130.5 184.8V191M131.5 211V219.5M132.5 186.8V191M133.5 211V216.8M135.5 211V216.4M187.5 211V712M258.5 131V638M259.5 176V230M260.5 150V225M261.5 211V237M262.5 169.8V191M263.5 211V230.7M264.5 174.9V191M265.5 211V222M266.5 179.6V191M267.5 211V218.7M268.5 183.4V191M269.5 211V216.6M270.5 185.2V191M271.5 211V216.3M272.5 186.6V191M273.5 211V217M274.5 186.9V191M275.5 211V216.4M327.5 211V712M398.5 131V638M399.5 176V230M400.5 150V225M401.5 211V237.9M402.5 174V191M403.5 211V230.2M404.5 182.4V191M405.5 211V221.4M406.5 179V191M407.5 211V222.8M408.5 185.2V191M409.5 211V218.1M410.5 186.6V191M411.5 211V219M412.5 185.8V191M413.5 211V215.8M468.5 211V712M538.5 131V638M539.5 176V230M540.5 150V225M541.5 211V235.4M542.5 174.6V191M543.5 211V232.2M544.5 181.1V191M545.5 211V226M546.5 181.7V191M547.5 211V219.4M548.5 184.1V191M549.5 211V218.7M550.5 185V191M551.5 211V217.6M552.5 185.4V191M553.5 211V217.4M555.5 211V216.1M608.5 211V712M679.5 131V638M680.5 176V230M681.5 150V225M682.5 211V227.8M683.5 172.9V191M684.5 211V224.4M685.5 174.5V191M686.5 211V227.4M687.5 180.9V191M688.5 211V224.5M689.5 182V191M690.5 211V221.6M691.5 184.8V191M692.5 211V215.8M694.5 211V217.6M695.5 186.2V191M748.5 211V712M819.5 131V638M820.5 176V230M821.5 150V225M822.5 211V233.8M823.5 178.5V191M824.5 211V227.4M825.5 178.8V191M826.5 211V221.4M827.5 178.3V191M828.5 211V224.4M829.5 180.8V191M830.5 211V218M831.5 186.9V191M832.5 211V218.6M833.5 185V191M834.5 211V215.8M836.5 211V216.2M889.5 211V712M959.5 131V638M960.5 176V230M961.5 150V225M962.5 211V236.6M963.5 172.3V191M964.5 211V223.1M965.5 177.2V191M966.5 211V222.3M967.5 179V191M968.5 211V218.7M969.5 182.1V191M970.5 211V218.8M971.5 186.3V191M972.5 211V216.6M973.5 185.3V191M974.5 211V217.9M975.5 186.2V191M1029.5 211V712M1100.5 131V638M1101.5 176V230M1102.5 150V225M1103.5 211V232.2M1104.5 176.1V191M1105.5 211V225.6M1106.5 177.5V191M1107.5 211V225.1M1108.5 179.4V191M1109.5 211V222.3M1110.5 185.2V191M1111.5 211V218.5M1112.5 184.4V191M1113.5 211V218.6M1114.5 185V191M1115.5 211V217.2M1117.5 211V215.6M1169.5 211V712M1240.5 131V638M1241.5 176V230M1242.5 150V225M1243.5 211V229.9M1244.5 170.6V191M1245.5 211V223.8M1246.5 177.9V191M1247.5 211V222.1M1248.5 183.4V191M1249.5 211V218.9M1250.5 182.9V191M1251.5 211V219.5M1252.5 184.5V191M1253.5 211V218.5M1255.5 211V218M1256.5 186.2V191"/>
<path fill="#fb4ccc" d="M47 632.8H48V631.5H49V630.4H50V633.3H51V632.3H52V632.2H53V634.1H54V632.5H55V632.5H56V632.2H57V632.5H58V633.8H59V633.4H60V634.9H61V633.6H62V632.8H63V635.2H64V633.1H65V634.5H66V636.4H67V636H68V635.8H69V633.6H70V633.9H71V635.2H72V635.5H73V634.8H74V634.8H75V634.9H76V636.6H77V635.4H78V636.5H79V633.3H80V632.8H81V635.9H82V636.2H83V636.2H84V637.1H85V636.1H86V634.2H87V635.3H88V635.9H89V633.7H90V633.7H91V636.8H92V634.5H93V636.3H94V633.5H95V637.3H96V636.5H97V635.5H98V635H99V634.2H100V634H101V636.1H102V635.9H103V635.1H104V636.1H105V637.6H106V636H107V632.3H108V637H109V636.9H110V635.4H111V637.4H112V636.8H113V635.7H114V636.2H115V636.2H116V635.5H117V635.9H118V656H117V655.4H116V653.7H115V655.4H114V655.8H113V653.9H112V654.7H111V653.6H110V654.8H109V653.7H108V653H107V653.1H106V656.9H105V653.9H104V654.4H103V653.5H102V653.6H101V653.2H100V653.5H99V655.8H98V656H97V654.7H96V655.8H95V654.4H94V656.9H93V656.7H92V656.1H91V653.7H90V657.2H89V654.5H88V656.8H87V656H86V653.2H85V655.1H84V660H83V654.7H82V657.7H81V654.3H80V656.7H79V657.1H78V653.9H77V657.4H76V658.4H75V657.3H74V656.6H73V654.8H72V656.1H71V655.2H70V657.2H69V654.6H68V655.5H67V654.2H66V654.3H65V656.7H64V654H63V656.9H62V653.9H61V656.1H60V654.6H59V654.6H58V655.2H57V656.8H56V656.8H55V659H54V655.6H53V657.3H52V657.7H51V656.5H50V657.2H49V658.8H48V657.2H47ZM188 630.5H189V631.6H190V631.4H191V634.6H192V634.3H193V633.7H194V633.6H195V633.3H196V631.7H197V630.8H198V632.4H199V633.5H200V633.4H201V635.9H202V633H203V632.3H204V634.6H205V636H206V635H207V634.8H208V636.6H209V636.5H210V636.4H211V632.9H212V634.5H213V636.5H214V631.1H215V634.5H216V633.4H217V634.3H218V632.2H219V635.3H220V633.5H221V635.5H222V634.1H223V634.3H224V635.4H225V637.1H226V636.9H227V636.5H228V635.2H229V636.3H230V636.4H231V636.3H232V635H233V635.2H234V635.9H235V633.6H236V636.5H237V635.2H238V636.5H239V633.2H240V637.2H241V637.5H242V637.7H243V636H244V636.2H245V636.2H246V635.4H247V637.3H248V634.1H249V635.7H250V635.4H251V633.6H252V635.1H253V632.1H254V636.9H255V633.8H256V635.6H257V637.4H258V653.3H257V654.8H256V653.7H255V653.7H254V655.8H253V655.1H252V657.7H251V655.6H250V659.1H249V654.5H248V655.5H247V656.8H246V653.9H245V653.9H244V653.4H243V653.9H242V655.6H241V659.3H240V656.8H239V653.3H238V653.3H237V657.5H236V655.2H235V654.7H234V654.5H233V654.3H232V654.8H231V655.8H230V654.6H229V654.3H228V653.8H227V656.2H226V657.5H225V655.3H224V653.7H223V657H222V654.5H221V659.1H220V653.6H219V656.5H218V656.4H217V656.3H216V656.9H215V655.6H214V655.1H213V653.8H212V654.9H211V653.9H210V656.3H209V655.3H208V655.2H207V653.6H206V655.9H205V655.9H204V656.6H203V655.3H202V656H201V654.4H200V656.8H199V657.5H198V657.7H197V657.4H196V658.4H195V657.7H194V655.7H193V654.7H192V657.4H191V656.7H190V655.1H189V659H188ZM328 631.7H329V631.2H330V633.8H331V634.5H332V631H333V631.8H334V634.9H335V635.2H336V632.5H337V632.1H338V633.7H339V635.6H340V632.9H341V635.8H342V632.5H343V635.9H344V635.8H345V632.8H346V635.7H347V636.4H348V633.8H349V636.4H350V633H351V635.9H352V636.8H353V633.6H354V634.7H355V634.8H356V636.8H357V633.6H358V635H359V635.7H360V636.7H361V634.5H362V634.9H363V636.9H364V636.3H365V635.6H366V635.2H367V634.6H368V635.3H369V636.1H370V635.6H371V635.7H372V636.1H373V637.6H374V635.1H375V635.3H376V632.7H377V635.5H378V636H379V634.4H380V634.3H381V634.1H382V635.7H383V635.1H384V635.3H385V636H386V635.9H387V636.7H388V635.6H389V636.5H390V637.1H391V632.9H392V636.2H393V635.6H394V637.8H395V636.3H396V634.3H397V635.7H398V632.9H399V654.7H398V655.7H397V657.7H396V655.8H395V657.5H394V653.8H393V654H392V657.4H391V656.7H390V659.2H389V655H388V654.5H387V653H386V653.6H385V653.6H384V654H383V655.9H382V655.1H381V654H380V653.9H379V657.9H378V656.7H377V653.6H376V653.5H375V654.4H374V654.4H373V657.4H372V654.3H371V655.6H370V654.6H369V656.1H368V654.4H367V655.5H366V656.3H365V653.3H364V658.7H363V655.5H362V655.9H361V659.8H360V655.3H359V653.4H358V657.2H357V655.1H356V653.4H355V653.6H354V655.2H353V654.2H352V657.3H351V655.2H350V654.5H349V655.5H348V655H347V658H346V657.3H345V655.1H344V656.8H343V657.8H342V656H341V654.8H340V657.9H339V657.2H338V655.9H337V658.4H336V656.3H335V654.6H334V656.4H333V654.8H332V660.7H331V660.6H330V656.5H329V657.7H328ZM468 629.5H469V634.1H470V634H471V632.1H472V629.7H473V632.5H474V629.7H475V633.5H476V631.9H477V635.3H478V634.4H479V630.3H480V635.5H481V635.8H482V634.3H483V630.1H484V634.4H485V635.7H486V633.8H487V636H488V634.7H489V633.2H490V632.1H491V634.1H492V634.8H493V634.1H494V635.9H495V635.6H496V636.4H497V634H498V636.3H499V636.4H500V633.5H501V634.2H502V635.3H503V634.3H504V633.7H505V636.9H506V636.7H507V634.6H508V635H509V637.5H510V634.2H511V634.3H512V632.6H513V637.2H514V636.9H515V633.9H516V635.2H517V633.8H518V635.4H519V634.1H520V633.7H521V635.9H522V636.1H523V633.9H524V637.3H525V636.6H526V634.2H527V637.7H528V637.6H529V634.8H530V634.2H531V634.5H532V637.8H533V636.7H534V636.5H535V635.7H536V636.6H537V635.7H538V636.1H539V655.4H538V654.1H537V655.5H536V655.4H535V657.2H534V656.5H533V656H532V653.8H531V655.3H530V653.5H529V656.7H528V659.6H527V655.2H526V658.1H525V658.4H524V653.9H523V654.9H522V657.4H521V656.2H520V653.5H519V655.9H518V656H517V657.1H516V655.5H515V655.1H514V659.4H513V653.4H512V653.1H511V657.5H510V653.2H509V656.3H508V653.3H507V653.5H506V656.1H505V653.9H504V655.7H503V657H502V655.9H501V654.4H500V653.3H499V655.2H498V657.5H497V655.5H496V653.4H495V655.3H494V653.4H493V653.7H492V657.6H491V657.4H490V657.4H489V654.8H488V657.4H487V654.3H486V654H485V655.8H484V655.3H483V655.8H482V655.1H481V657.9H480V658.3H479V654.6H478V657.8H477V655H476V654.4H475V657.6H474V658.3H473V657H472V658.1H471V657.2H470V656.7H469V657.6H468ZM608 631H609V631.2H610V631.7H611V630.7H612V631.4H613V633.6H614V633H615V629.6H616V633.3H617V634.6H618V635.3H619V633.6H620V631.8H621V635.5H622V634H623V634.1H624V635.6H625V632.9H626V634.1H627V635.8H628V633.4H629V636.6H630V632.7H631V632.8H632V635.1H633V633.6H634V633.4H635V635.8H636V635.1H637V635H638V632.9H639V636.2H640V636.9H641V636.9H642V636.6H643V637.1H644V633.7H645V637.3H646V632.9H647V637.1H648V634.9H649V636.9H650V633.8H651V635.3H652V637.1H653V634H654V634.8H655V634.5H656V633.4H657V636.4H658V634.8H659V635.2H660V635.1H661V637.1H662V634.2H663V635H664V636.1H665V635.1H666V635.4H667V636H668V633.7H669V637.8H670V636.9H671V635.5H672V636.8H673V635.6H674V635.6H675V635.4H676V635.7H677V635.4H678V635H679V657.6H678V657.5H677V658H676V654.4H675V653.7H674V656.4H673V653.1H672V655.4H671V657.4H670V653.9H669V657.2H668V656.6H667V655.3H666V653.7H665V654.8H664V658H663V658.6H662V657.4H661V658.9H660V655.2H659V655.5H658V656H657V655.2H656V654.1H655V657H654V655.9H653V657.3H652V656.4H651V654H650V656.8H649V654.8H648V653.2H647V656.5H646V656.3H645V658H644V655.1H643V653.7H642V655.5H641V657.4H640V656.6H639V654.4H638V657.9H637V655.1H636V655.8H635V654.4H634V655H633V654.7H632V653.8H631V654.8H630V655.6H629V655.1H628V653.6H627V657.1H626V654.7H625V655.2H624V654.3H623V655.8H622V656.6H621V654.8H620V654H619V655.8H618V656.7H617V655.8H616V657.6H615V654.5H614V656.1H613V656H612V655.4H611V658.7H610V658.5H609V661.4H608ZM749 628.7H750V630.3H751V630.7H752V632.5H753V631.9H754V631.9H755V632.2H756V631.4H757V633.3H758V632.8H759V634.6H760V631.9H761V635H762V634.2H763V632.1H764V632.9H765V632.7H766V636.1H767V635.9H768V635.8H769V630.7H770V632.8H771V633.4H772V634.2H773V634.7H774V636H775V634.9H776V636.2H777V635.8H778V634.8H779V635.4H780V635.7H781V634.8H782V636H783V635.6H784V633.6H785V636.9H786V633.6H787V637.4H788V637H789V635H790V635.6H791V634.3H792V633.7H793V635.4H794V635.2H795V637.1H796V632.8H797V635.9H798V633.2H799V637H800V633.7H801V636.3H802V636.9H803V634H804V637.7H805V634.6H806V637.1H807V636.9H808V635.5H809V635.8H810V634.5H811V637.5H812V637.7H813V637.4H814V634.7H815V635.3H816V634.4H817V635.8H818V634.4H819V636.2H820V656.9H819V653.8H818V657.4H817V656.1H816V653.9H815V657H814V653.7H813V653.2H812V653.1H811V654.1H810V653.1H809V658.4H808V656H807V656.6H806V653.6H805V653.4H804V654.3H803V655.9H802V656.4H801V654.2H800V653.3H799V657.1H798V653.5H797V654.4H796V657.6H795V654.6H794V656H793V654.9H792V656.4H791V656.5H790V656.1H789V653.6H788V655.6H787V655.1H786V654.8H785V655.7H784V653.3H783V653.3H782V653.8H781V656.3H780V653.9H779V654H778V655.9H777V654H776V656.6H775V657.3H774V656.3H773V657.9H772V655H771V656.9H770V654.8H769V654H768V658.5H767V654.3H766V654.2H765V655H764V655.1H763V654H762V655.2H761V659.6H760V656.9H759V657.5H758V658.3H757V657.6H756V656.7H755V654.8H754V658.8H753V658.9H752V659H751V654.8H750V656H749ZM889 634H890V633.9H891V633.6H892V633.9H893V634.7H894V634.4H895V634H896V633.3H897V633.9H898V633.2H899V634H900V634.3H901V635.4H902V633H903V635.7H904V635.3H905V635H906V635.6H907V634.2H908V633.2H909V634.3H910V632.8H911V636.5H912V636.5H913V635.1H914V635.5H915V635.8H916V634.8H917V634.5H918V636.7H919V636.6H920V635.2H921V637H922V635.4H923V637.2H924V636.7H925V637.1H926V635.3H927V634.9H928V635.4H929V637.5H930V637.4H931V632.7H932V632.9H933V633.6H934V636.5H935V634.7H936V637.6H937V635.2H938V636.4H939V636.6H940V637.7H941V633.9H942V635.1H943V634.4H944V633.6H945V636.7H946V637.4H947V634.6H948V637.1H949V635.6H950V633.6H951V636.8H952V636.5H953V634.8H954V636.8H955V635.7H956V637.2H957V636.4H958V635.7H959V634H960V654.7H959V653.4H958V653.2H957V654.6H956V654.8H955V655.7H954V654.8H953V656.7H952V654.1H951V656.4H950V653.7H949V656.9H948V653.6H947V653.1H946V654H945V653.1H944V657.1H943V655.8H942V657.2H941V653.6H940V655.3H939V653.6H938V653.3H937V654.4H936V656.8H935V658.4H934V657H933V656H932V655H931V655.5H930V657.9H929V654.6H928V654.4H927V656.2H926V654.3H925V653.9H924V653.6H923V655.4H922V654.3H921V655H920V657.2H919V653.4H918V656.4H917V657.3H916V654.8H915V657.7H914V655H913V655.9H912V654.5H911V653.9H910V653.7H909V655.1H908V655.6H907V656.4H906V657.6H905V655.1H904V654.6H903V657.6H902V658.3H901V656.9H900V654H899V657.4H898V654.8H897V657.4H896V658.4H895V658.9H894V654.8H893V657.3H892V655.2H891V655.3H890V655.3H889ZM1029 633.8H1030V632.6H1031V632H1032V633.4H1033V629.3H1034V633.5H1035V634.4H1036V634.4H1037V635.2H1038V632H1039V633.6H1040V632.5H1041V634.2H1042V635.1H1043V635.4H1044V633.5H1045V632.4H1046V634.2H1047V634.9H1048V632.6H1049V633.8H1050V636.2H1051V636.5H1052V636.6H1053V636.6H1054V636.8H1055V636.2H1056V634.5H1057V636.4H1058V634.2H1059V636.4H1060V636.2H1061V636H1062V635.3H1063V634.9H1064V635.9H1065V637H1066V633.9H1067V636.3H1068V635.6H1069V634H1070V636.8H1071V633.7H1072V635.6H1073V634H1074V634.7H1075V633.9H1076V633.9H1077V634.7H1078V637.6H1079V634.5H1080V636.1H1081V637.4H1082V637.7H1083V635.9H1084V636.9H1085V635.3H1086V635.3H1087V634.8H1088V634.2H1089V637.6H1090V637.5H1091V635.2H1092V637.4H1093V636.6H1094V636.3H1095V635H1096V635.8H1097V636.4H1098V634.8H1099V635.5H1100V655.7H1099V654.5H1098V656.8H1097V656.9H1096V656.6H1095V657.3H1094V656.1H1093V655.1H1092V655.9H1091V653.1H1090V655.6H1089V657.1H1088V657H1087V656.1H1086V655.8H1085V653.1H1084V653.9H1083V655.9H1082V653.4H1081V656.2H1080V655.5H1079V654.3H1078V653.9H1077V654.9H1076V657.5H1075V656.4H1074V654.1H1073V658.8H1072V656.2H1071V654.4H1070V653.5H1069V653.6H1068V656.4H1067V656.4H1066V657.8H1065V655.7H1064V653.9H1063V658.5H1062V658.8H1061V655H1060V656.4H1059V654.5H1058V659H1057V655.1H1056V658.3H1055V657.2H1054V655.3H1053V655.2H1052V653.7H1051V655.5H1050V653.8H1049V653.9H1048V653.9H1047V654.2H1046V655.9H1045V654H1044V656.1H1043V656.2H1042V656.8H1041V657.4H1040V658.6H1039V656H1038V654.6H1037V655.6H1036V658.8H1035V658.7H1034V657H1033V656.8H1032V656.4H1031V661.2H1030V655.1H1029ZM1170 632.7H1171V631H1172V634.3H1173V631H1174V634.7H1175V633.8H1176V634H1177V634.3H1178V633.6H1179V633.5H1180V633.9H1181V632H1182V632H1183V633.5H1184V631H1185V636.1H1186V634.8H1187V632.6H1188V636.3H1189V636.3H1190V636.3H1191V636.6H1192V634.7H1193V636H1194V633.6H1195V633.9H1196V634H1197V633.4H1198V632.9H1199V631.8H1200V636.6H1201V636.9H1202V635.4H1203V632.3H1204V634.1H1205V636.8H1206V634.3H1207V634.6H1208V635.9H1209V634.2H1210V637.2H1211V637.5H1212V637H1213V636.1H1214V632.1H1215V636.2H1216V636.6H1217V637.5H1218V634.8H1219V632.1H1220V633.5H1221V637.3H1222V636.3H1223V637.1H1224V635.1H1225V635.6H1226V635.8H1227V635.5H1228V636.6H1229V633.9H1230V637.3H1231V634.2H1232V634.9H1233V636.1H1234V635.6H1235V634.2H1236V636H1237V636.5H1238V633.5H1239V635.8H1240V654.3H1239V653.5H1238V656.1H1237V655H1236V656.3H1235V653.9H1234V657.4H1233V653H1232V653.2H1231V655.9H1230V654H1229V656H1228V654.7H1227V657.9H1226V654.4H1225V656.3H1224V654.9H1223V653.9H1222V656.9H1221V654.7H1220V653.5H1219V655.3H1218V655.1H1217V655.3H1216V656H1215V656H1214V654H1213V656.7H1212V654.2H1211V654.6H1210V653.6H1209V655H1208V653.2H1207V653.7H1206V656.8H1205V658.2H1204V656.1H1203V654.3H1202V655.8H1201V656.2H1200V656.3H1199V654.4H1198V656.2H1197V653.7H1196V653.8H1195V653.5H1194V656.4H1193V654.7H1192V657.2H1191V656.3H1190V653.6H1189V655.8H1188V655.2H1187V656.9H1186V656.9H1185V653.8H1184V656.4H1183V658.4H1182V656.4H1181V658.5H1180V656.5H1179V658.1H1178V656.2H1177V655.8H1176V654.9H1175V657.2H1174V655.6H1173V654.8H1172V659.3H1171V656.6H1170ZM3 186.7H4V190.2H5V187.7H6V188H7V184.7H8V189.7H9V187.2H10V188.9H11V186.9H12V187.8H13V190.5H14V186.4H15V186.9H16V189.7H17V188.9H18V186.2H19V186.7H20V190.8H21V188H22V186.7H23V189.4H24V187.2H25V189.3H26V190.7H27V185.6H28V186.7H29V190.4H30V188.4H31V191H32V186.5H33V187.5H34V190.7H35V188.1H36V186.6H37V189.1H38V187H39V190.3H40V187.2H41V190.5H42V186.1H43V187.4H44V188.5H45V186.9H46V187.2H47V215.8H46V214.8H45V216.5H44V216H43V217H42V215.9H41V216.6H40V214.3H39V215.5H38V217.7H37V213.8H36V213.1H35V217.6H34V212.2H33V216.2H32V214.8H31V212.8H30V213.4H29V211.5H28V213.1H27V214.7H26V212.7H25V213H24V211.7H23V213.7H22V215H21V213.5H20V213.5H19V212.3H18V212.3H17V212.9H16V214.4H15V213.8H14V212.2H13V213.8H12V216.6H11V211.2H10V213.1H9V212.1H8V212.3H7V212.8H6V213.6H5V213.6H4V211H3ZM119 190.2H120V189.5H121V189.9H122V187.9H123V186.3H124V190.9H125V189.8H126V190.6H127V190.3H128V186.4H129V189.1H130V187.6H131V190.2H132V190H133V188.4H134V186.2H135V190.4H136V186.7H137V190.2H138V187.5H139V190.6H140V186.9H141V189.9H142V190.2H143V190.7H144V190.1H145V187.6H146V187.1H147V190.9H148V186.3H149V189.3H150V189.7H151V190.4H152V188H153V188H154V190.7H155V191H156V187.2H157V186.8H158V187.9H159V188.7H160V188H161V189.7H162V186.9H163V183.3H164V189.5H165V190.4H166V187.6H167V185.3H168V190.9H169V188.8H170V190.4H171V184.8H172V189.5H173V190.4H174V190H175V190.6H176V186.4H177V188.4H178V190.2H179V186.6H180V189.1H181V189.6H182V190.9H183V190.5H184V186.8H185V187.4H186V190.8H187V186.7H188V211H187V216.6H186V211H185V215.7H184V213.5H183V215.1H182V212.3H181V216.9H180V213.3H179V214.3H178V212H177V211.8H176V214.5H175V211.1H174V214.6H173V211.5H172V211.6H171V215.7H170V212H169V212.3H168V212.1H167V214.8H166V214.3H165V211H164V215.7H163V214.5H162V211.6H161V211.4H160V213.8H159V214.3H158V216.5H157V214.1H156V211.8H155V213.6H154V211.2H153V211.2H152V215.3H151V212.9H150V213.7H149V215.7H148V214.8H147V211.7H146V214.3H145V211.1H144V212.3H143V211.9H142V213H141V211.3H140V215.4H139V211.9H138V211.2H137V212.6H136V211.1H135V216.2H134V212.5H133V215.4H132V214.2H131V213H130V216.1H129V214.2H128V211.3H127V212.3H126V212.5H125V216.1H124V213.6H123V216.6H122V211.5H121V211H120V216.5H119ZM259 188.7H260V189.2H261V190.5H262V187.2H263V188.3H264V189.9H265V188.4H266V191H267V189.2H268V185.5H269V190.3H270V188.3H271V190.2H272V187.1H273V190.6H274V187.5H275V189H276V187.4H277V188.5H278V187.7H279V189.8H280V186.5H281V186.5H282V188H283V188.1H284V188.9H285V186.8H286V187.7H287V190.5H288V188.8H289V186.7H290V184.7H291V187.4H292V186.3H293V183.8H294V186.1H295V185.5H296V190.8H297V186.1H298V189.3H299V190.4H300V190.1H301V188.7H302V188.6H303V189.1H304V187.1H305V188.6H306V189.1H307V190.7H308V186.6H309V188.1H310V185.7H311V187.6H312V186.1H313V186.5H314V190.6H315V188.9H316V188.3H317V186.2H318V186.5H319V185.5H320V188.2H321V185.1H322V191H323V190.9H324V190.7H325V189.6H326V190H327V189.2H328V213.3H327V211.9H326V212.9H325V215.8H324V215.1H323V211.3H322V211H321V211.8H320V212.3H319V211.7H318V212.8H317V216.4H316V213.9H315V218.4H314V212.5H313V219.5H312V213.9H311V213.4H310V213.2H309V216H308V211.3H307V211H306V211.9H305V214.1H304V215.5H303V213H302V216.4H301V211.7H300V215.1H299V213H298V211.3H297V211.3H296V212.9H295V211.1H294V212.6H293V211.8H292V212.3H291V213.1H290V214.4H289V216.8H288V212.5H287V211.1H286V212H285V215.7H284V217H283V211.1H282V214.8H281V212.5H280V211.2H279V214.6H278V214H277V212.8H276V214H275V212.3H274V215.1H273V211H272V213.8H271V214.6H270V216.4H269V212.4H268V214.5H267V215.4H266V212.6H265V215.1H264V215.8H263V213.6H262V212.4H261V216.4H260V218H259ZM400 186.6H401V188.1H402V186.9H403V189.1H404V185.6H405V188.5H406V189.5H407V190.4H408V188.6H409V187.3H410V189.2H411V190.2H412V190.4H413V184.5H414V187.4H415V187.8H416V189.2H417V186.5H418V184.5H419V190.6H420V187.7H421V190.9H422V190.6H423V190.1H424V190.6H425V186.2H426V187.4H427V187.6H428V187H429V186.5H430V190.1H431V188.2H432V191H433V190.1H434V189.5H435V189.2H436V190.4H437V188.2H438V186.8H439V184.7H440V189H441V188H442V187H443V191H444V188.9H445V190.6H446V189.4H447V188.6H448V190.8H449V187.4H450V187.3H451V189.7H452V188.4H453V190.9H454V189.7H455V189.9H456V189H457V187.1H458V189.8H459V186.1H460V190.7H461V190.8H462V187.9H463V188.3H464V184.7H465V188.3H466V189H467V189.6H468V214.1H467V216.9H466V211.8H465V211H464V216.7H463V211.8H462V213.7H461V212.6H460V216.8H459V213.6H458V214.1H457V212.5H456V212.7H455V214.8H454V211.1H453V214H452V215.3H451V217.4H450V214.4H449V211.3H448V212.1H447V218.6H446V213.7H445V212.9H444V211.1H443V214.7H442V211.4H441V211.3H440V212.4H439V215.7H438V214.2H437V215.3H436V216.7H435V212.3H434V214.2H433V211.1H432V216.8H431V211.9H430V211.1H429V216.1H428V212.4H427V212.3H426V211.1H425V213.2H424V212.2H423V215.2H422V212.6H421V212.9H420V215.5H419V211.2H418V216.1H417V214.4H416V212.7H415V211.7H414V211.9H413V211.8H412V212.4H411V216.9H410V215.5H409V215.1H408V211H407V211.3H406V212.5H405V211.4H404V213.3H403V214.7H402V216.3H401V211.3H400ZM540 189.9H541V189.8H542V188.1H543V190H544V188.4H545V188.4H546V188.7H547V188.7H548V187.4H549V191H550V185H551V190.1H552V187.6H553V190.6H554V185.2H555V190.4H556V187.4H557V187H558V187.7H559V191H560V189.1H561V188.5H562V190.6H563V187.6H564V191H565V188.1H566V187.7H567V186.3H568V187.2H569V190.4H570V186.2H571V185.5H572V186.1H573V191H574V187.7H575V190.8H576V188.8H577V190H578V186.3H579V185.3H580V189.8H581V188H582V190.1H583V187.9H584V185.7H585V186.3H586V185.6H587V189.1H588V186.4H589V186.4H590V190.8H591V187H592V189H593V191H594V190.6H595V186H596V186.6H597V184.3H598V183.9H599V187.2H600V190.2H601V190.8H602V184.3H603V190.2H604V188.2H605V186.4H606V189.7H607V187.4H608V211.9H607V215.1H606V212.3H605V211.1H604V212.8H603V213.9H602V212.2H601V213.7H600V211.6H599V213.5H598V213H597V211.4H596V216.7H595V216.3H594V214.7H593V214.2H592V211.5H591V216.7H590V216.8H589V214.5H588V214.8H587V215.9H586V216H585V215.6H584V211.7H583V215.3H582V216.1H581V214.4H580V218.4H579V216H578V217.8H577V218.2H576V211.1H575V215.9H574V218.2H573V215.5H572V213.4H571V215.6H570V214.5H569V214.5H568V215.9H567V213.4H566V215H565V212.4H564V215.7H563V212.1H562V216.5H561V212.4H560V216.5H559V215.4H558V213H557V212.6H556V217.6H555V211.2H554V213.8H553V211.6H552V214.4H551V211.1H550V211.4H549V218H548V216.1H547V211.7H546V212.3H545V212H544V212.4H543V212.2H542V211.1H541V212.4H540ZM680 187.5H681V189.7H682V188.2H683V188.2H684V190.9H685V189.1H686V189.3H687V190.7H688V186.8H689V189.1H690V188.1H691V187.1H692V190.3H693V189.8H694V189.7H695V186.4H696V187.8H697V187.9H698V189H699V187.4H700V188.3H701V187.9H702V190.9H703V190.3H704V190.1H705V190.8H706V186.3H707V187.3H708V190.4H709V190.7H710V188.2H711V189.1H712V189.3H713V189.2H714V185.6H715V190.4H716V187.8H717V186.8H718V189.9H719V189.4H720V189.7H721V189.6H722V190.7H723V190.6H724V190.6H725V189.1H726V186.1H727V187.6H728V188.9H729V189.1H730V189.8H731V190.2H732V187.4H733V186.6H734V188.6H735V187.6H736V189.5H737V186.9H738V186.8H739V189.1H740V189.7H741V186.4H742V185.2H743V190.2H744V188.5H745V190.8H746V185.3H747V191H748V187.7H749V214.5H748V211.8H747V212.3H746V214.2H745V216.8H744V212H743V213H742V214.9H741V212.1H740V215.6H739V214.8H738V213.1H737V214.5H736V215.9H735V211.8H734V213.8H733V214.5H732V215.5H731V218.3H730V212.4H729V213.6H728V211.7H727V211.2H726V216.3H725V213H724V218.1H723V213.6H722V212.3H721V213.7H720V213.4H719V212.7H718V213.9H717V211.3H716V211H715V213.6H714V211.6H713V213.7H712V213.7H711V216.8H710V213.8H709V216.4H708V212.4H707V212.6H706V213.9H705V213.3H704V218.4H703V216.6H702V213.6H701V211.5H700V211.1H699V213.3H698V214.7H697V217H696V211.7H695V219.4H694V211.1H693V215.2H692V211.7H691V215H690V216.2H689V211.6H688V213.5H687V211.3H686V211.9H685V215.4H684V213.7H683V216.9H682V212.6H681V211.7H680ZM820 190.9H821V190.2H822V185.4H823V191H824V191H825V190.1H826V186.7H827V187.4H828V189H829V189.9H830V188.2H831V188H832V189H833V189.3H834V189.5H835V190.4H836V190.3H837V186.2H838V188.1H839V185.4H840V189.4H841V190.5H842V186.6H843V190.6H844V189.8H845V190.6H846V189.8H847V187.1H848V190.8H849V188.3H850V184.8H851V189.1H852V188.3H853V188.1H854V190H855V187.3H856V190.6H857V186.5H858V184.8H859V190.2H860V188.1H861V190.4H862V190.1H863V191H864V187.6H865V187.8H866V186.8H867V189.5H868V187.3H869V189.4H870V186.9H871V190.9H872V188.5H873V191H874V187.8H875V190.2H876V188.2H877V188.4H878V189.7H879V187H880V187.5H881V190H882V186.4H883V189.3H884V188.9H885V187.5H886V189.1H887V188.8H888V185.7H889V212.4H888V213.1H887V218.4H886V211.2H885V216.5H884V214.7H883V211.9H882V215.5H881V214.9H880V211H879V213.2H878V211.2H877V212.4H876V213H875V213.2H874V211.1H873V213.2H872V212H871V218H870V213.8H869V214.3H868V212H867V212.5H866V218.7H865V211.8H864V216.1H863V216H862V212H861V212.4H860V214.1H859V211.6H858V215.6H857V215.8H856V213.1H855V213.4H854V213.1H853V214.6H852V219H851V215.2H850V213.8H849V216.4H848V212.7H847V212H846V211.1H845V214.3H844V211.9H843V215.7H842V211.6H841V215.9H840V211.5H839V212.8H838V216.7H837V213.3H836V218.5H835V213.9H834V216.7H833V215.2H832V216.1H831V212.9H830V217.3H829V216.3H828V212.1H827V211.3H826V213.8H825V211H824V214H823V211.6H822V214.3H821V213.3H820ZM961 189.1H962V189.2H963V185.2H964V186.1H965V190.8H966V189.6H967V189.4H968V187.6H969V188.2H970V188.7H971V189.2H972V184.7H973V187.2H974V188.4H975V188.7H976V188H977V187.9H978V189.8H979V190.2H980V190.8H981V188H982V187.8H983V190.9H984V188.5H985V188.2H986V190.2H987V188.6H988V189.7H989V188.4H990V188.5H991V183.2H992V190.1H993V187.8H994V189.9H995V188.9H996V189.6H997V191H998V189.9H999V187.9H1000V189.4H1001V187.6H1002V190.6H1003V188.1H1004V189.3H1005V188.6H1006V185.9H1007V188.9H1008V189.8H1009V187.1H1010V190.2H1011V187.8H1012V187.5H1013V189.9H1014V190.2H1015V186.6H1016V187.4H1017V185.6H1018V188H1019V189.3H1020V188.8H1021V190.3H1022V190.4H1023V185.9H1024V186.4H1025V187.4H1026V186.7H1027V187.9H1028V187.2H1029V216.4H1028V216.3H1027V211.2H1026V217H1025V215.7H1024V212.7H1023V211.8H1022V216.7H1021V214H1020V212.2H1019V219.7H1018V211.6H1017V212.7H1016V211.8H1015V217.9H1014V211.7H1013V211.1H1012V212.4H1011V211.1H1010V214.1H1009V220.2H1008V212.3H1007V215.5H1006V214.1H1005V212.9H1004V213.2H1003V220.4H1002V218.2H1001V211.1H1000V216.7H999V216.3H998V214.9H997V216.4H996V211.5H995V211.3H994V212.8H993V211.3H992V214H991V214.8H990V216.1H989V212.2H988V211.2H987V213.2H986V213.8H985V214.1H984V214.5H983V213.7H982V213H981V216.8H980V214.2H979V213.1H978V216.9H977V214.3H976V218.2H975V213.7H974V213.9H973V216.4H972V212.7H971V211.1H970V216H969V217.3H968V211.4H967V213.4H966V211.3H965V213.9H964V211.2H963V215.5H962V211.8H961ZM1101 187.6H1102V189.5H1103V188.8H1104V186.9H1105V191H1106V190.4H1107V185.6H1108V186.5H1109V188.3H1110V187.7H1111V191H1112V189.2H1113V190.7H1114V189.4H1115V189.2H1116V187.5H1117V191H1118V189.6H1119V186.1H1120V188.3H1121V187.3H1122V185.2H1123V186.3H1124V190.7H1125V190.9H1126V190.2H1127V188.2H1128V186.2H1129V188.6H1130V189.6H1131V186.8H1132V189.6H1133V187.9H1134V189.9H1135V186.3H1136V189H1137V187.8H1138V189.1H1139V188.9H1140V191H1141V189.7H1142V188.5H1143V185.4H1144V189.8H1145V189.8H1146V189.8H1147V189.8H1148V186.2H1149V187.6H1150V187.8H1151V186.1H1152V189H1153V190H1154V190.5H1155V187H1156V189.7H1157V190.7H1158V190.7H1159V186H1160V189.1H1161V186.6H1162V189.4H1163V189.1H1164V187.6H1165V187.9H1166V187.1H1167V190.2H1168V186.8H1169V189H1170V212.6H1169V211.1H1168V215.4H1167V214.7H1166V216.2H1165V214H1164V211.7H1163V217.3H1162V212.1H1161V214.7H1160V216.1H1159V213.5H1158V216.4H1157V214.1H1156V211.3H1155V211.9H1154V213.1H1153V215.5H1152V216.8H1151V215.5H1150V211.3H1149V214.5H1148V213.8H1147V216.5H1146V213.4H1145V214.9H1144V213.5H1143V215.2H1142V217.9H1141V213H1140V214.1H1139V214.7H1138V213.5H1137V215.3H1136V214H1135V214.6H1134V211.4H1133V215.1H1132V211.5H1131V218.5H1130V215H1129V211.2H1128V212.8H1127V213.1H1126V213.8H1125V211.7H1124V211.9H1123V215.8H1122V214.7H1121V212.7H1120V211.3H1119V215.8H1118V212.7H1117V216.7H1116V218.8H1115V213.2H1114V213.8H1113V212.7H1112V211.6H1111V214.4H1110V214.4H1109V211.2H1108V216.6H1107V216.2H1106V216.6H1105V213.5H1104V212.1H1103V213.4H1102V212.5H1101ZM1241 190.8H1242V189.8H1243V190.3H1244V187H1245V188.8H1246V186.4H1247V186.7H1248V184.8H1249V188.5H1250V211.2H1249V216.3H1248V211.5H1247V216.2H1246V213.2H1245V211.5H1244V213.2H1243V213.7H1242V211.6H1241Z"/>
<path fill="none" stroke="#10f0f0" stroke-width="1.3" d="M102 630 L102.2 603 L102.5 577.9 L102.8 554.7 L103 533.1 L103.2 513.2 L103.5 494.7 L103.8 477.5 L104 461.6 L104.2 446.9 L104.5 433.2 L104.8 420.5 L105 408.8 L105.2 397.9 L105.5 387.8 L105.8 378.4 L106 369.7 L106.2 361.7 L106.5 354.2 L106.8 347.3 L107 340.9 L107.2 335 L107.5 329.5 L107.8 324.4 L108 319.6 L108.2 315.3 L108.5 311.2 L108.8 307.4 L109 303.9 L109.2 300.7 L109.5 297.7 L109.8 294.9 L110 292.3 L110.2 289.9 L110.5 287.7 L110.8 285.6 L111 283.7 L111.2 282 L111.5 280.3 L111.8 278.8 L112 277.4 L112.2 276.1 L112.5 274.9 L112.8 273.8 L113 272.7 L113.2 271.8 L113.5 270.9 L113.8 270 L114 269.3 L114.2 268.5 L114.5 267.9 L114.8 267.3 L115 266.7 L115.2 266.2 L115.5 265.7 L115.8 265.2 L116 264.8 L116.2 264.4 L116.5 264.1 L116.8 263.7 L117 263.4 L117.2 263.1 L117.5 262.9 L117.8 262.6 L118 262.4 L118.2 262.2 L118.5 262 L118.8 261.8 L119 261.6 L119.2 261.5M382 259.5 L382.2 286.5 L382.5 311.6 L382.8 334.8 L383 356.4 L383.2 376.3 L383.5 394.8 L383.8 412 L384 427.9 L384.2 442.6 L384.5 456.3 L384.8 469 L385 480.7 L385.2 491.6 L385.5 501.7 L385.8 511.1 L386 519.8 L386.2 527.8 L386.5 535.3 L386.8 542.2 L387 548.6 L387.2 554.5 L387.5 560 L387.8 565.1 L388 569.9 L388.2 574.2 L388.5 578.3 L388.8 582.1 L389 585.6 L389.2 588.8 L389.5 591.8 L389.8 594.6 L390 597.2 L390.2 599.6 L390.5 601.8 L390.8 603.9 L391 605.8 L391.2 607.5 L391.5 609.2 L391.8 610.7 L392 612.1 L392.2 613.4 L392.5 614.6 L392.8 615.7 L393 616.8 L393.2 617.7 L393.5 618.6 L393.8 619.5 L394 620.2 L394.2 621 L394.5 621.6 L394.8 622.2 L395 622.8 L395.2 623.3 L395.5 623.8 L395.8 624.3 L396 624.7 L396.2 625.1 L396.5 625.4 L396.8 625.8 L397 626.1 L397.2 626.4 L397.5 626.6 L397.8 626.9 L398 627.1 L398.2 627.3 L398.5 627.5 L398.8 627.7 L399 627.9 L399.2 628M664 630 L664.2 603 L664.5 577.9 L664.8 554.7 L665 533.1 L665.2 513.2 L665.5 494.7 L665.8 477.5 L666 461.6 L666.2 446.9 L666.5 433.2 L666.8 420.5 L667 408.8 L667.2 397.9 L667.5 387.8 L667.8 378.4 L668 369.7 L668.2 361.7 L668.5 354.2 L668.8 347.3 L669 340.9 L669.2 335 L669.5 329.5 L669.8 324.4 L670 319.6 L670.2 315.3 L670.5 311.2 L670.8 307.4 L671 303.9 L671.2 300.7 L671.5 297.7 L671.8 294.9 L672 292.3 L672.2 289.9 L672.5 287.7 L672.8 285.6 L673 283.7 L673.2 282 L673.5 280.3 L673.8 278.8 L674 277.4 L674.2 276.1 L674.5 274.9 L674.8 273.8 L675 272.7 L675.2 271.8 L675.5 270.9 L675.8 270 L676 269.3 L676.2 268.5 L676.5 267.9 L676.8 267.3 L677 266.7 L677.2 266.2 L677.5 265.7 L677.8 265.2 L678 264.8 L678.2 264.4 L678.5 264.1 L678.8 263.7 L679 263.4 L679.2 263.1 L679.5 262.9 L679.8 262.6 L680 262.4 L680.2 262.2 L680.5 262 L680.8 261.8 L681 261.6 L681.2 261.5M944 259.5 L944.2 286.5 L944.5 311.6 L944.8 334.8 L945 356.4 L945.2 376.3 L945.5 394.8 L945.8 412 L946 427.9 L946.2 442.6 L946.5 456.3 L946.8 469 L947 480.7 L947.2 491.6 L947.5 501.7 L947.8 511.1 L948 519.8 L948.2 527.8 L948.5 535.3 L948.8 542.2 L949 548.6 L949.2 554.5 L949.5 560 L949.8 565.1 L950 569.9 L950.2 574.2 L950.5 578.3 L950.8 582.1 L951 585.6 L951.2 588.8 L951.5 591.8 L951.8 594.6 L952 597.2 L952.2 599.6 L952.5 601.8 L952.8 603.9 L953 605.8 L953.2 607.5 L953.5 609.2 L953.8 610.7 L954 612.1 L954.2 613.4 L954.5 614.6 L954.8 615.7 L955 616.8 L955.2 617.7 L955.5 618.6 L955.8 619.5 L956 620.2 L956.2 621 L956.5 621.6 L956.8 622.2 L957 622.8 L957.2 623.3 L957.5 623.8 L957.8 624.3 L958 624.7 L958.2 625.1 L958.5 625.4 L958.8 625.8 L959 626.1 L959.2 626.4 L959.5 626.6 L959.8 626.9 L960 627.1 L960.2 627.3 L960.5 627.5 L960.8 627.7 L961 627.9 L961.2 628M1224.5 630 L1224.8 603 L1225 577.9 L1225.2 554.7 L1225.5 533.1 L1225.8 513.2 L1226 494.7 L1226.2 477.5 L1226.5 461.6 L1226.8 446.9 L1227 433.2 L1227.2 420.5 L1227.5 408.8 L1227.8 397.9 L1228 387.8 L1228.2 378.4 L1228.5 369.7 L1228.8 361.7 L1229 354.2 L1229.2 347.3 L1229.5 340.9 L1229.8 335 L1230 329.5 L1230.2 324.4 L1230.5 319.6 L1230.8 315.3 L1231 311.2 L1231.2 307.4 L1231.5 303.9 L1231.8 300.7 L1232 297.7 L1232.2 294.9 L1232.5 292.3 L1232.8 289.9 L1233 287.7 L1233.2 285.6 L1233.5 283.7 L1233.8 282 L1234 280.3 L1234.2 278.8 L1234.5 277.4 L1234.8 276.1 L1235 274.9 L1235.2 273.8 L1235.5 272.7 L1235.8 271.8 L1236 270.9 L1236.2 270 L1236.5 269.3 L1236.8 268.5 L1237 267.9 L1237.2 267.3 L1237.5 266.7 L1237.8 266.2 L1238 265.7 L1238.2 265.2 L1238.5 264.8 L1238.8 264.4 L1239 264.1 L1239.2 263.7 L1239.5 263.4 L1239.8 263.1 L1240 262.9 L1240.2 262.6 L1240.5 262.4 L1240.8 262.2 L1241 262 L1241.2 261.8 L1241.5 261.6 L1241.8 261.5"/>
<path fill="#00fcf4" d="M3 611.3H4V612.3H5V612.2H6V614.2H7V613.3H8V612.5H9V610.7H10V614.4H11V610.5H12V612.8H13V611.5H14V611.4H15V612.5H16V614.2H17V613.9H18V614.3H19V613.9H20V611.7H21V612.9H22V612H23V609.5H24V614.5H25V613.1H26V612.6H27V611.7H28V611.6H29V611.7H30V610.9H31V613.6H32V613.8H33V611.1H34V612.4H35V613.9H36V609.7H37V611.5H38V609.4H39V612H40V613.3H41V611.2H42V610.8H43V611.7H44V614.3H45V614.4H46V613.9H47V614.2H48V611.4H49V612.4H50V614H51V613.2H52V614.4H53V613.2H54V614.4H55V611.7H56V612.3H57V614.2H58V614.4H59V613.6H60V613.8H61V613.2H62V612.6H63V614.1H64V613.1H65V613.2H66V613.9H67V612.3H68V613H69V612.8H70V613.8H71V613.1H72V610.8H73V612.5H74V611.2H75V614.3H76V613.3H77V614.3H78V613.4H79V613.3H80V610.9H81V613.6H82V612.2H83V614.1H84V613.6H85V614.4H86V612.4H87V612.4H88V612H89V613.7H90V612.5H91V612.4H92V612.6H93V612.7H94V612.8H95V611.7H96V609.8H97V612.7H98V614.3H99V611.5H100V611.3H101V614.4H102V648.3H101V646.8H100V646.4H99V646.3H98V647.5H97V647.3H96V646.8H95V646.3H94V646.1H93V646.1H92V646.2H91V645.6H90V646.7H89V648.6H88V646H87V648.6H86V647.7H85V646.8H84V645.7H83V646H82V646H81V646.5H80V646.9H79V646H78V646.9H77V646.8H76V646.2H75V647.1H74V647.6H73V646.9H72V646.7H71V648.3H70V646.6H69V650H68V647.9H67V645.6H66V648.7H65V645.8H64V647.2H63V647.6H62V647H61V647.4H60V646.3H59V646.4H58V647.6H57V648.9H56V648H55V647.3H54V646H53V650.2H52V647.8H51V646.1H50V645.8H49V646.9H48V645.9H47V647.4H46V646.7H45V645.7H44V646H43V649.2H42V648.3H41V647.5H40V646.5H39V648.7H38V647.3H37V645.6H36V648.3H35V648.3H34V648.2H33V647H32V646.4H31V646.6H30V648.8H29V645.7H28V645.9H27V648.5H26V646.9H25V648.3H24V650.1H23V645.6H22V645.9H21V646.6H20V645.7H19V646.2H18V645.9H17V650.6H16V648H15V647.6H14V650.5H13V648.2H12V650.1H11V648.9H10V648.1H9V646.4H8V649.1H7V648.2H6V646.6H5V648.9H4V646.4H3ZM102 612.2H103V514.5H104V442.6H105V391.6H106V350.1H107V322.2H108V302.2H109V286.9H110V273.7H111V265.8H112V258.3H113V254H114V252H115V249.6H116V245.2H117V246.4H118V242.7H119V241.9H120V242.6H121V243.2H122V242.7H123V242.6H124V240.3H125V242.8H126V239H127V242.6H128V241H129V239.7H130V239.6H131V242H132V241.9H133V240.1H134V241.7H135V241.2H136V241.4H137V240.3H138V242.2H139V241.6H140V241.7H141V242.4H142V241.7H143V241.4H144V240.3H145V239.2H146V239.6H147V241.8H148V242.1H149V241.1H150V241.9H151V240H152V239H153V239.1H154V242H155V240.3H156V242.3H157V240H158V241.3H159V239.6H160V242.3H161V242.4H162V238.8H163V238.8H164V240.3H165V241.2H166V241.2H167V239.6H168V241.2H169V240.8H170V241.9H171V240.4H172V241.5H173V238.9H174V242H175V240.3H176V240.7H177V242.2H178V239.8H179V240.7H180V242.3H181V240.1H182V239.6H183V239.6H184V240.4H185V241.9H186V239.8H187V240.9H188V242.4H189V238.7H190V239.6H191V241.6H192V239.1H193V240.1H194V241.8H195V241.6H196V241.2H197V240H198V239.4H199V240.7H200V242.5H201V240.6H202V241.2H203V240H204V241.1H205V240.2H206V240H207V242.4H208V241.6H209V242.5H210V241.7H211V239.3H212V241.9H213V242.4H214V241.1H215V241.5H216V242.5H217V241.9H218V240.1H219V241.8H220V240.3H221V241.7H222V241.3H223V240.8H224V239.5H225V240.4H226V242.4H227V240.1H228V241H229V242.5H230V240.7H231V240H232V240.8H233V240.5H234V239.8H235V242H236V242.4H237V239.7H238V242.5H239V241.7H240V239.5H241V240.4H242V239.3H243V242.4H244V240H245V239.3H246V241.4H247V242.1H248V240.6H249V241.1H250V242.5H251V240.8H252V240.6H253V242.1H254V238.8H255V239.7H256V241.3H257V242.4H258V240.1H259V242.4H260V240.7H261V241.7H262V242.1H263V241.6H264V238.5H265V241.5H266V242.2H267V242.1H268V240.7H269V240.7H270V239.7H271V240.9H272V241.8H273V242.5H274V242H275V240.6H276V240.4H277V242.3H278V239.6H279V241.1H280V242.4H281V240.3H282V240.5H283V241.2H284V242.2H285V241.6H286V241H287V240.8H288V242.4H289V242.1H290V241.7H291V239.2H292V241.2H293V240H294V240.8H295V241.7H296V240.4H297V239.2H298V241.6H299V239.1H300V240.4H301V240.9H302V241H303V239.8H304V238.1H305V239.2H306V241.4H307V241H308V241.8H309V240.3H310V242.3H311V239.6H312V242.3H313V242.4H314V241.9H315V239.9H316V240.7H317V240.8H318V242.4H319V241.8H320V242.1H321V240H322V241.9H323V239.7H324V238H325V241.4H326V240.1H327V241H328V241.6H329V239.8H330V242.4H331V241.7H332V239.7H333V241.5H334V240.5H335V242.4H336V240.3H337V240.6H338V242.2H339V240.4H340V241.8H341V241.9H342V240.5H343V242.3H344V239.3H345V240.9H346V240.1H347V239.7H348V241.2H349V240H350V242H351V240.1H352V242.5H353V239.8H354V241.1H355V241.9H356V241.6H357V241.8H358V242.3H359V238H360V242.5H361V239.6H362V239.5H363V241.4H364V242.2H365V242.2H366V240.4H367V240.4H368V240.3H369V240.9H370V242.1H371V240.6H372V241.2H373V241.4H374V237.8H375V242H376V241.6H377V241.1H378V240.8H379V242.4H380V239.7H381V241.1H382V279.2H381V275.7H380V275.2H379V276.6H378V277.8H377V277H376V275.3H375V279.4H374V276.3H373V275H372V276.7H371V280.3H370V280H369V280.2H368V279.8H367V274.6H366V275.7H365V277.5H364V274.5H363V280H362V280.2H361V277.1H360V274.5H359V276.6H358V279.7H357V275.8H356V279.4H355V275.6H354V277.5H353V278.3H352V279.4H351V279.5H350V282.5H349V275.2H348V275.3H347V275.1H346V279.8H345V275H344V275.1H343V279.7H342V278.2H341V278.1H340V275.9H339V274.5H338V278.6H337V280.4H336V280H335V274.5H334V278.8H333V274.8H332V278.8H331V276.3H330V279.5H329V277.9H328V275.2H327V278.9H326V275.4H325V276.5H324V277.9H323V277.7H322V274.8H321V274.8H320V276.8H319V278.5H318V280.1H317V277.7H316V276.2H315V274.6H314V277.1H313V274.7H312V277.3H311V277H310V278.3H309V278.1H308V275.3H307V277.8H306V275.3H305V274.9H304V280.2H303V279H302V276.7H301V275.1H300V274.7H299V276.3H298V276.7H297V278.2H296V274.5H295V275.6H294V279.1H293V279.7H292V279.6H291V279.5H290V278.1H289V275.6H288V279.2H287V279.1H286V279.5H285V276.3H284V278.5H283V275.7H282V279.4H281V274.6H280V274.7H279V275.3H278V277.2H277V278.6H276V276.3H275V274.9H274V274.7H273V276.6H272V278H271V280.4H270V279.5H269V277.1H268V276.2H267V278H266V279.7H265V280.5H264V282.3H263V278.7H262V280.3H261V274.9H260V274.6H259V277.6H258V274.7H257V276.2H256V275.6H255V281.4H254V277.6H253V274.6H252V278.6H251V277H250V279.5H249V280.2H248V276.4H247V274.6H246V279.4H245V278.9H244V275.6H243V274.5H242V274.6H241V275.1H240V276.3H239V279.7H238V274.6H237V280.3H236V279.7H235V274.8H234V280.1H233V276.5H232V275.3H231V275.9H230V278.4H229V278.4H228V278.8H227V280.5H226V279.6H225V279.4H224V275.6H223V279.7H222V279.9H221V277.8H220V277.3H219V275.3H218V279.9H217V278.5H216V274.5H215V280.4H214V280.3H213V278.2H212V277.6H211V274.5H210V276.4H209V279.7H208V279.1H207V279.7H206V276.3H205V276.6H204V278.3H203V275H202V276.8H201V274.5H200V275.7H199V276.8H198V278.7H197V279.3H196V277.2H195V277.9H194V274.7H193V275.5H192V279.6H191V279.7H190V277H189V278.4H188V283.6H187V275H186V276.3H185V278.2H184V275H183V280.2H182V279H181V277.8H180V279H179V279H178V275.8H177V278.8H176V277.3H175V274.6H174V280.4H173V279.4H172V274.8H171V277H170V281.7H169V277.2H168V275.8H167V280.9H166V278.1H165V276.7H164V278.1H163V275.7H162V274.9H161V276.3H160V278.2H159V274.9H158V278.3H157V274.6H156V279.1H155V274.9H154V277.2H153V279.8H152V276.9H151V282H150V279.2H149V277.1H148V280H147V281.3H146V274.7H145V278.8H144V275.7H143V277.1H142V274.7H141V278.9H140V274.7H139V274.9H138V276.9H137V276.7H136V278.4H135V276.3H134V275.2H133V274.7H132V275.2H131V278.6H130V276.9H129V275.2H128V280.2H127V275.3H126V275.8H125V279.4H124V275.9H123V283H122V281.6H121V279.9H120V280.2H119V282.9H118V282.4H117V287.5H116V284.7H115V289.6H114V290.2H113V298.2H112V306.1H111V309.3H110V324H109V338.5H108V361.1H107V385.9H106V428.6H105V480.1H104V549.8H103V648.1H102ZM382 243.1H383V339.2H384V407.7H385V464.6H386V504.2H387V533H388V553.1H389V568H390V579H391V587.5H392V593.6H393V598H394V602.4H395V606.7H396V608.3H397V608H398V608.4H399V611.2H400V610.1H401V612.7H402V611.7H403V612.5H404V610.5H405V614H406V612.3H407V609.8H408V613.3H409V613H410V611.3H411V610.8H412V610.1H413V613.2H414V611.6H415V612.4H416V612H417V613.8H418V612.7H419V613.6H420V611.2H421V613.9H422V613.6H423V614.5H424V613.2H425V612.7H426V613.8H427V613.4H428V613.6H429V611.7H430V611.6H431V609.5H432V610.7H433V613.8H434V614.4H435V612.5H436V613.7H437V610.8H438V613.1H439V613.8H440V611.7H441V613.6H442V610.7H443V610.6H444V611H445V614.1H446V609.4H447V614H448V611.3H449V613.4H450V611.5H451V612.4H452V613.9H453V612.5H454V614.5H455V611.9H456V611H457V612.7H458V610.9H459V612.3H460V613.9H461V611.1H462V614.4H463V612.9H464V611.6H465V613.2H466V611.1H467V613.8H468V614.1H469V614.4H470V614.1H471V612.8H472V610.9H473V611.9H474V612H475V614.4H476V614.4H477V611.4H478V612.2H479V614.3H480V614.4H481V611.3H482V613.1H483V610.8H484V612.4H485V613.3H486V613.5H487V612.7H488V612.2H489V613.5H490V611.5H491V612.6H492V611.9H493V611H494V612.6H495V613.4H496V611.4H497V613.5H498V613.2H499V613.5H500V612.7H501V614.5H502V612.3H503V611.6H504V613.9H505V611.4H506V613.9H507V611.7H508V611.1H509V612.8H510V614H511V614.4H512V612.7H513V614.2H514V611.9H515V614.3H516V612.6H517V614.5H518V611H519V612.7H520V614H521V612.9H522V613.5H523V610.8H524V613H525V612.6H526V612.8H527V612.2H528V614.4H529V614.4H530V614.4H531V612.2H532V613.6H533V614H534V614.1H535V611.6H536V611H537V614.3H538V613.1H539V613.2H540V613.3H541V612.1H542V614.3H543V613.7H544V613.6H545V612.3H546V614.3H547V611.9H548V611.2H549V614.4H550V611.3H551V612.5H552V612.7H553V611.5H554V613.1H555V611.1H556V614.4H557V614.1H558V611.7H559V614.3H560V613.6H561V614.1H562V613.3H563V612.6H564V612H565V612.6H566V612.1H567V611.4H568V613.9H569V614.4H570V611.1H571V613.6H572V613.1H573V614.5H574V613H575V614H576V611H577V612.9H578V612.1H579V612.7H580V611.8H581V613.3H582V613.7H583V612.7H584V612.4H585V611.7H586V610.1H587V611.8H588V614.2H589V614.4H590V612H591V613H592V614.1H593V611H594V611.3H595V614.5H596V612.3H597V612.3H598V612H599V611.2H600V612.2H601V614H602V614.4H603V614.4H604V611.5H605V612H606V613.8H607V612.6H608V611H609V614.1H610V612.6H611V611.3H612V613.1H613V614.4H614V610.3H615V611.2H616V614.3H617V613.9H618V614.3H619V613.5H620V613.5H621V613.4H622V613.5H623V613.7H624V613.5H625V612.4H626V611H627V613.8H628V614.2H629V613.8H630V611.5H631V612H632V612.6H633V611.4H634V612.8H635V612.1H636V612.2H637V614.2H638V612.3H639V609.4H640V613.7H641V612.5H642V611.7H643V612.7H644V614.5H645V614.4H646V613.9H647V614.4H648V613.5H649V612.5H650V613.9H651V614.3H652V609.8H653V611H654V611.9H655V613H656V611.2H657V614.5H658V613.5H659V612.4H660V614H661V613.7H662V612.8H663V614.5H664V646.1H663V646H662V647.4H661V645.7H660V647.6H659V645.9H658V646.4H657V648H656V648.7H655V647.1H654V645.7H653V648.7H652V646.6H651V647.3H650V647.2H649V647.6H648V647.2H647V645.6H646V646.9H645V645.9H644V645.5H643V648.7H642V646.5H641V646.8H640V647.2H639V647.5H638V647.8H637V648.2H636V646.4H635V647.6H634V648.2H633V647.8H632V650.2H631V648H630V646.4H629V648H628V645.5H627V647.8H626V648.5H625V647H624V645.6H623V646.1H622V646.2H621V646.9H620V646.4H619V645.7H618V645.5H617V647.2H616V645.5H615V648.5H614V646.1H613V648.2H612V646.9H611V648.7H610V645.7H609V647.4H608V646.2H607V648.5H606V646.8H605V647.3H604V649.4H603V646.7H602V645.8H601V648.7H600V646.1H599V646.2H598V648.6H597V647.4H596V647.8H595V645.6H594V649.5H593V648.5H592V648.7H591V646H590V647.6H589V645.5H588V645.5H587V647.2H586V647.1H585V646.2H584V646.5H583V647H582V647H581V645.7H580V648.3H579V649.5H578V647.1H577V645.8H576V647.2H575V645.8H574V648.6H573V645.9H572V646.3H571V648.5H570V645.7H569V645.6H568V645.6H567V648H566V648.9H565V647.6H564V645.5H563V647.5H562V646.2H561V645.9H560V646.2H559V649.6H558V648.3H557V645.6H556V646.8H555V646.3H554V647.3H553V648.3H552V646.5H551V645.9H550V647.9H549V645.8H548V646.4H547V648H546V649H545V648H544V647.8H543V648.8H542V646.9H541V646.8H540V647.5H539V648.2H538V646.5H537V646.3H536V645.5H535V646.5H534V645.5H533V649.2H532V648.2H531V645.9H530V647.8H529V646.5H528V647H527V648H526V646.1H525V648.2H524V649.3H523V648.4H522V645.8H521V648.1H520V648.5H519V648.7H518V647.8H517V647.1H516V647.8H515V647.2H514V648.3H513V648.5H512V646.7H511V647.5H510V645.5H509V645.9H508V645.5H507V646.4H506V646.2H505V647.2H504V648H503V645.8H502V647.8H501V648.5H500V648.1H499V646.9H498V648.4H497V648.5H496V647.8H495V647.3H494V648.9H493V646.5H492V647.9H491V645.7H490V648.4H489V645.7H488V647.8H487V645.6H486V646.9H485V648.5H484V645.8H483V648.4H482V647.2H481V647.2H480V648H479V648.5H478V646.4H477V650.2H476V648.6H475V645.8H474V646.3H473V646.1H472V648H471V647.1H470V647.2H469V646.2H468V647.3H467V646.1H466V646.2H465V648.7H464V645.8H463V645.9H462V645.9H461V646.7H460V647.1H459V647.9H458V645.7H457V649.1H456V645.7H455V650H454V646.5H453V647.2H452V648.7H451V647.1H450V648H449V647.2H448V645.8H447V648H446V645.9H445V647.7H444V645.6H443V646.6H442V646.5H441V645.9H440V646.6H439V646.4H438V646.2H437V647.9H436V646.5H435V645.7H434V648.6H433V646.3H432V647H431V648.9H430V648.9H429V648.5H428V646.2H427V646.9H426V645.9H425V648.9H424V648.3H423V646.5H422V647.8H421V649.7H420V647.3H419V646.2H418V648.1H417V647.6H416V647.5H415V645.5H414V645.5H413V646.3H412V649.3H411V647.8H410V646.9H409V649.6H408V649.6H407V647.7H406V647.2H405V647.4H404V648.3H403V646.1H402V645.1H401V647.9H400V646.7H399V646H398V642.6H397V641H396V639.3H395V638H394V633H393V629.8H392V622.1H391V612.7H390V601.7H389V588.4H388V565.8H387V535.3H386V497.9H385V445.5H384V374.5H383V276.3H382ZM664 612.2H665V514.9H666V443.9H667V390H668V351.2H669V321.8H670V301.3H671V283.4H672V274.6H673V266.7H674V259.9H675V254.5H676V249.3H677V248.1H678V247.2H679V243.7H680V244.5H681V242.4H682V242.7H683V242.7H684V242H685V240.4H686V240.8H687V241.7H688V242.6H689V239.4H690V240.2H691V242.3H692V241.8H693V242.5H694V241.2H695V240.2H696V240.9H697V239H698V240.9H699V242.4H700V238.8H701V241.8H702V240.4H703V241H704V242.4H705V240.1H706V242.1H707V240.4H708V242.5H709V240.3H710V241.5H711V241.8H712V240.3H713V239.8H714V241H715V242.4H716V241.9H717V241.1H718V240.8H719V242.4H720V240.8H721V239.8H722V239.6H723V240.8H724V242.5H725V240.8H726V240.5H727V240.6H728V239.2H729V239.2H730V242.3H731V241.9H732V239.8H733V241.6H734V240.8H735V240.2H736V241.2H737V242H738V242.2H739V240.4H740V241.5H741V241.5H742V242.4H743V241.6H744V242.4H745V239.7H746V242H747V242.3H748V239.4H749V242.1H750V242.4H751V241.6H752V239.9H753V240.3H754V242.3H755V241.2H756V239.8H757V241.2H758V239.7H759V241.3H760V242H761V241.5H762V242.4H763V240H764V240.1H765V241.4H766V242.4H767V240H768V240.5H769V241.1H770V242.2H771V240.7H772V240.2H773V238.7H774V240.5H775V239.7H776V239.5H777V242.4H778V242.2H779V240H780V240.7H781V241.6H782V241.3H783V241.8H784V242.5H785V241H786V240.6H787V241.4H788V240.9H789V242H790V241.7H791V239.8H792V241.5H793V240H794V239.1H795V240.5H796V242.1H797V241.1H798V241.5H799V241.7H800V241.3H801V240.2H802V240.6H803V241.8H804V242.1H805V241.7H806V240.6H807V241.8H808V241.3H809V242H810V241.5H811V242.4H812V241H813V242H814V241.4H815V241.6H816V239.7H817V242.4H818V242H819V239.5H820V240.6H821V240.9H822V242H823V242.1H824V239.9H825V239.1H826V240.7H827V242.3H828V241.9H829V240.6H830V241.9H831V241.1H832V242.3H833V240.4H834V238.9H835V241.7H836V239.7H837V239H838V239.2H839V241.6H840V242.5H841V242.1H842V240.5H843V241.5H844V240H845V239.5H846V239.9H847V242.3H848V241.5H849V240.1H850V241.1H851V240.5H852V242.4H853V239.6H854V241.6H855V242.3H856V241.3H857V241.9H858V240.5H859V239.9H860V241.4H861V241.4H862V242.5H863V241.5H864V240.3H865V242.5H866V241.8H867V240.1H868V242.2H869V241.1H870V240.4H871V237.8H872V239.5H873V242.5H874V241.3H875V238.9H876V240.1H877V239.8H878V241.1H879V242.3H880V240.3H881V240H882V241.1H883V242.4H884V240.5H885V241H886V242H887V240.9H888V240.4H889V239.8H890V241.8H891V240.4H892V239.6H893V241.5H894V239.7H895V239.8H896V241.4H897V242.1H898V240.8H899V240.7H900V241.1H901V242.5H902V239.1H903V242.2H904V240.8H905V240.8H906V240H907V239.1H908V239.5H909V239.7H910V242.3H911V240.5H912V240.4H913V239.8H914V241.9H915V242.4H916V241.8H917V239.5H918V241.8H919V240.7H920V240H921V240.4H922V239.8H923V241H924V239.1H925V240.6H926V239.8H927V241.2H928V242H929V240.2H930V241.6H931V239.6H932V240H933V241.6H934V242.4H935V242.5H936V240.6H937V241.7H938V240H939V241.7H940V239.6H941V241.7H942V239.7H943V242.1H944V281.6H943V276H942V280H941V276.1H940V277.1H939V276.8H938V275.9H937V276.6H936V277.3H935V276H934V279.7H933V280.4H932V275.9H931V276H930V275.3H929V278.2H928V276.3H927V279H926V279.2H925V274.6H924V276.3H923V278.6H922V280.1H921V275.2H920V280.1H919V274.9H918V275.3H917V283.2H916V277.8H915V275H914V279.6H913V279.8H912V279.8H911V275.9H910V278.2H909V276H908V276H907V280.2H906V280.3H905V277.2H904V274.9H903V277H902V274.6H901V279.9H900V276.5H899V279.2H898V277.6H897V274.9H896V277.7H895V277.4H894V276.5H893V280.2H892V279.6H891V282.9H890V279.7H889V278.1H888V277H887V277.9H886V278.1H885V280.1H884V280.4H883V275.4H882V280.3H881V275H880V278.4H879V277.3H878V279.8H877V277.7H876V280.9H875V274.8H874V277.8H873V280.2H872V278.5H871V278.9H870V276.1H869V277H868V276H867V274.6H866V282.3H865V278.2H864V279H863V275.8H862V278.4H861V276.5H860V277H859V277.4H858V274.7H857V274.7H856V275H855V278.5H854V279.4H853V275.2H852V275H851V275.4H850V278.9H849V283.2H848V277.3H847V278.2H846V274.6H845V279.5H844V276.1H843V279.3H842V281.7H841V274.8H840V278.4H839V279.2H838V274.7H837V276H836V279.7H835V277.6H834V275.8H833V283.1H832V280.2H831V281.9H830V278.2H829V277.8H828V278.9H827V275.7H826V274.8H825V278.7H824V275H823V277.9H822V280.4H821V277.4H820V276.1H819V280.4H818V277.6H817V276.7H816V275H815V274.6H814V276.9H813V279.2H812V275.2H811V275.4H810V274.5H809V275.5H808V277.4H807V274.5H806V275.7H805V277.5H804V274.8H803V278.5H802V282H801V278.7H800V280.5H799V276.4H798V278.4H797V279.8H796V278.5H795V279.5H794V278.3H793V277H792V275.8H791V280.4H790V279.3H789V275.5H788V277.7H787V277.5H786V280.4H785V275.4H784V277.1H783V278.6H782V278.8H781V276.2H780V278.2H779V279.6H778V278.6H777V276.1H776V274.9H775V278.1H774V279.9H773V278.3H772V277.2H771V280.5H770V275.4H769V277.4H768V277.5H767V276.1H766V279.3H765V280H764V274.5H763V274.5H762V276.2H761V276H760V279.1H759V275.6H758V276H757V279.3H756V275.7H755V280H754V277.8H753V275.7H752V279.6H751V275.4H750V277.9H749V275.9H748V281H747V276.4H746V279.1H745V274.8H744V274.5H743V275.4H742V277.6H741V280H740V275H739V277.4H738V278.3H737V278H736V279H735V276.5H734V277.1H733V278.5H732V276.3H731V274.5H730V275.6H729V278.6H728V278.2H727V275.5H726V275H725V280.1H724V279.6H723V278H722V281.2H721V279.3H720V278.7H719V274.8H718V278.8H717V275.1H716V275.4H715V280.9H714V278.4H713V283.3H712V276.6H711V274.5H710V274.8H709V279.6H708V279.2H707V274.9H706V274.9H705V279.8H704V279.3H703V276.9H702V277.7H701V275.7H700V279.6H699V278.2H698V275.1H697V275.5H696V275H695V281.8H694V278.9H693V281.1H692V277.7H691V275.6H690V276.1H689V278.5H688V277.4H687V278.1H686V276.7H685V279.9H684V276.4H683V278.5H682V280H681V277.6H680V278.5H679V280.4H678V282.2H677V288.8H676V290.8H675V298.5H674V303.7H673V307.4H672V320.9H671V337.6H670V357H669V386.3H668V424.7H667V476.8H666V551.7H665V646.5H664ZM944 241.6H945V340.8H946V409.5H947V461.8H948V504.1H949V532H950V551.2H951V569.3H952V579.7H953V588.9H954V596.3H955V600.4H956V603.1H957V603.9H958V608.3H959V610.6H960V610.4H961V611.6H962V610.4H963V612.3H964V612.9H965V612.8H966V613.6H967V613.1H968V612.1H969V613.7H970V614.2H971V612.4H972V614.3H973V612.8H974V613.4H975V612.9H976V612.1H977V613.6H978V611.1H979V612.1H980V611.8H981V613.9H982V612H983V612.4H984V612.3H985V614.4H986V613H987V614H988V614.4H989V612.4H990V612.8H991V611.8H992V614.4H993V614H994V613.7H995V610.6H996V611.4H997V614.2H998V612.1H999V613.6H1000V611.9H1001V613.5H1002V612.3H1003V612.2H1004V613.5H1005V613.2H1006V612.1H1007V613.8H1008V611.9H1009V613.7H1010V613.1H1011V612.4H1012V612H1013V613.7H1014V611H1015V613.5H1016V612.3H1017V610H1018V613.6H1019V611H1020V613.2H1021V611.4H1022V612H1023V613.4H1024V611.2H1025V610.3H1026V611.3H1027V612.9H1028V612.5H1029V611.6H1030V612.9H1031V614.1H1032V613.6H1033V614.1H1034V614.4H1035V613.3H1036V614.4H1037V612.2H1038V612.1H1039V612.9H1040V610.6H1041V614.1H1042V609.7H1043V614.2H1044V612.8H1045V610.9H1046V612.8H1047V612.4H1048V613.3H1049V613.6H1050V614.3H1051V614.2H1052V611.5H1053V611.4H1054V612.3H1055V612.3H1056V614.5H1057V611.4H1058V614.4H1059V612.2H1060V612.7H1061V609.3H1062V610.5H1063V612.7H1064V612.9H1065V612.9H1066V612.7H1067V614.4H1068V611.6H1069V611.5H1070V611.8H1071V613H1072V614.4H1073V612.4H1074V611.5H1075V612.2H1076V613.7H1077V612.5H1078V614.3H1079V614.2H1080V614.3H1081V611.6H1082V613.9H1083V613.7H1084V614.3H1085V612.8H1086V614.1H1087V611.7H1088V611.4H1089V610.5H1090V612.8H1091V614.3H1092V613.1H1093V612.8H1094V614H1095V612.1H1096V612.3H1097V612.1H1098V611.2H1099V613.9H1100V611.9H1101V613.8H1102V611.4H1103V614.3H1104V611.2H1105V613.2H1106V611H1107V612.3H1108V611.5H1109V612.1H1110V612.7H1111V613.2H1112V612.5H1113V614.5H1114V613.2H1115V614.4H1116V613H1117V614.4H1118V614.5H1119V613.5H1120V611.5H1121V611.5H1122V611.8H1123V613.4H1124V614.4H1125V613.9H1126V614.4H1127V610.4H1128V614.1H1129V613H1130V612.4H1131V611H1132V612.1H1133V613.9H1134V613.6H1135V614.1H1136V609.7H1137V611.6H1138V611.5H1139V614.3H1140V613.7H1141V613H1142V614.3H1143V611.5H1144V612.6H1145V611.3H1146V612.4H1147V613.3H1148V611.7H1149V613H1150V613.4H1151V613H1152V614.4H1153V613.9H1154V612H1155V613.8H1156V610.2H1157V613.4H1158V613.7H1159V612.9H1160V610.9H1161V611.4H1162V611.4H1163V614.5H1164V611.7H1165V611.8H1166V614.2H1167V613.3H1168V611.4H1169V614.5H1170V612.6H1171V612.9H1172V613.1H1173V614H1174V611.6H1175V611.5H1176V610.7H1177V612.2H1178V614.1H1179V612.2H1180V611.6H1181V612.9H1182V612.9H1183V611H1184V614.1H1185V614.3H1186V614.2H1187V612.8H1188V612.2H1189V613.7H1190V611.5H1191V611.6H1192V611.2H1193V613.5H1194V612.9H1195V611.1H1196V614H1197V611.7H1198V611.2H1199V611.6H1200V614H1201V613.8H1202V610.9H1203V614.2H1204V614H1205V612.6H1206V613.9H1207V614.4H1208V612.9H1209V612.5H1210V613.3H1211V614.1H1212V612.9H1213V612.7H1214V614.2H1215V613.2H1216V612.3H1217V610.9H1218V613.3H1219V614.1H1220V614H1221V611.5H1222V614.3H1223V612H1224V647.9H1223V647.9H1222V646.1H1221V645.8H1220V647.2H1219V646.5H1218V648.1H1217V648.3H1216V647.4H1215V647.5H1214V645.5H1213V647.6H1212V648.9H1211V649.3H1210V649H1209V647.2H1208V648.4H1207V645.5H1206V648.7H1205V647.7H1204V647.1H1203V646.4H1202V647.9H1201V647.2H1200V647H1199V645.8H1198V645.9H1197V648.9H1196V648.1H1195V646.6H1194V645.9H1193V646H1192V647.9H1191V647.8H1190V647.7H1189V648.5H1188V647.3H1187V648.3H1186V648.6H1185V646.7H1184V645.8H1183V645.7H1182V646.8H1181V647.7H1180V648.5H1179V645.7H1178V647.6H1177V645.5H1176V646H1175V646.8H1174V647.8H1173V646.5H1172V646.7H1171V648.5H1170V647.8H1169V646.6H1168V648H1167V648.9H1166V647.9H1165V647.6H1164V646.1H1163V647.5H1162V647.1H1161V646.3H1160V647.3H1159V649H1158V647H1157V645.7H1156V645.6H1155V646.7H1154V646.3H1153V648.7H1152V646.7H1151V647.3H1150V646H1149V648.8H1148V647.2H1147V647.6H1146V648.7H1145V649.7H1144V647.7H1143V646.6H1142V646.4H1141V645.9H1140V647.2H1139V646.9H1138V649.9H1137V647.3H1136V646.5H1135V646H1134V646.5H1133V646.1H1132V645.8H1131V648.3H1130V646.7H1129V647.1H1128V647H1127V648.2H1126V645.7H1125V646.8H1124V647.3H1123V646.7H1122V645.8H1121V648.7H1120V646.5H1119V646.8H1118V649.6H1117V648.6H1116V646.9H1115V648.4H1114V646H1113V646.4H1112V645.5H1111V646.6H1110V646.6H1109V646H1108V645.6H1107V647.3H1106V646.9H1105V648H1104V647.6H1103V648.1H1102V647.6H1101V646.3H1100V645.8H1099V646.5H1098V648.7H1097V649.8H1096V646.3H1095V649.5H1094V646.3H1093V648.6H1092V645.5H1091V646.1H1090V649.1H1089V645.8H1088V649.4H1087V646.1H1086V646.5H1085V646.1H1084V647H1083V645.9H1082V645.7H1081V647.8H1080V646.3H1079V646.3H1078V647.8H1077V645.8H1076V645.8H1075V646.5H1074V647.6H1073V650.3H1072V647.4H1071V646.2H1070V645.5H1069V646.4H1068V647.1H1067V646.1H1066V645.9H1065V646.7H1064V645.7H1063V648H1062V647H1061V648.6H1060V645.6H1059V650.6H1058V648.2H1057V647.2H1056V645.8H1055V648.5H1054V646.5H1053V646.9H1052V645.6H1051V646.1H1050V646.4H1049V648.7H1048V648.4H1047V645.7H1046V646H1045V646H1044V646.6H1043V647H1042V647.8H1041V646.6H1040V647.9H1039V647.7H1038V646.9H1037V645.6H1036V645.5H1035V646.6H1034V648.3H1033V647.2H1032V647.5H1031V646H1030V645.8H1029V646.6H1028V648.4H1027V647.5H1026V646.4H1025V647.6H1024V646H1023V649.6H1022V647.8H1021V647H1020V647.5H1019V648.6H1018V649.1H1017V645.8H1016V646.3H1015V645.7H1014V649.4H1013V648.7H1012V646.5H1011V647.9H1010V647.7H1009V648.7H1008V647.1H1007V646.3H1006V647.7H1005V646.4H1004V647.9H1003V647.7H1002V647.5H1001V646.1H1000V648.4H999V646.1H998V646.4H997V646.4H996V648.2H995V648.5H994V645.6H993V650.4H992V647.5H991V645.8H990V646.4H989V647.5H988V646.1H987V645.9H986V646.6H985V645.5H984V648.1H983V645.9H982V649.3H981V650.8H980V645.5H979V647.9H978V649H977V647.9H976V646.4H975V649.3H974V646.7H973V646.5H972V646.2H971V646.7H970V647.5H969V646.4H968V645.2H967V648.1H966V645.2H965V646.3H964V646.8H963V646.9H962V646.7H961V644.8H960V644.4H959V640.7H958V640H957V637.5H956V632.7H955V629.2H954V623.2H953V613.8H952V604H951V587.1H950V567.5H949V538.1H948V496.7H947V446.2H946V374H945V279H944ZM1224 612.3H1225V558.9H1226V477.2H1227V415.2H1228V370H1229V337.2H1230V310.2H1231V293.7H1232V279.1H1233V270.6H1234V263H1235V255.2H1236V251.2H1237V250H1238V248.6H1239V246.1H1240V245.9H1241V244.1H1242V243.1H1243V243.6H1244V241.2H1245V241.8H1246V242.7H1247V242.3H1248V242H1249V241.1H1250V279.1H1249V278.4H1248V278.2H1247V280.7H1246V277.9H1245V278.1H1244V275.9H1243V281.8H1242V281.6H1241V279.7H1240V281.9H1239V280.7H1238V285.1H1237V288.8H1236V293.5H1235V301H1234V310.2H1233V313.6H1232V326.6H1231V349.3H1230V375.3H1229V405.5H1228V448.2H1227V516.3H1226V593.8H1225V646.7H1224Z"/>
</g>
<!-- C2 dashed line -->
<path d="M43 648.5H1250" stroke="#f6f0f6" stroke-width="1.2" stroke-dasharray="5 4.86" fill="none"/>
<!-- trigger dashed line -->
<path d="M879.5 68.4V790" stroke="#f0f0f0" stroke-width="1.15" stroke-dasharray="5.8 4.4" fill="none"/>
</svg>
<div class="topwhite"></div>
<div class="leftwhite"></div>
<div class="titlebar"></div>
<div class="titleline"></div>
<div class="title">Waveform View</div>
<svg style="position:absolute;left:0;top:0" width="1250" height="80">
 <path d="M600 8.8H594V24.7H600" stroke="#fff" stroke-width="1.6" fill="none"/>
 <path d="M1160 8.8H1166.5V24.7H1160" stroke="#fff" stroke-width="1.6" fill="none"/>
 <rect x="599" y="15.8" width="562" height="2.2" fill="#fafafa"/>
 <path d="M871.5 8H887.5L879.5 25Z" fill="#f5a11e"/>
 <path d="M876.5 11.5H882.5M879.5 11.5V20" stroke="#9a2a9a" stroke-width="1.8" fill="none"/>
 <path d="M868.5 29H889.5L879 38.5Z" fill="#f5a11e"/>
 <path d="M870 40H888.5V59H883.5L879.3 65.5L875 59H870Z" stroke="#f5a11e" stroke-width="2" fill="#000"/>
 <path d="M874.5 45.5H884M879.3 45.5V55" stroke="#f5a11e" stroke-width="2" fill="none"/>
</svg>
<!-- channel labels -->
<svg style="position:absolute;left:0;top:620px" width="60" height="160">
 <path d="M9 15.4H30.5L42 27.7L30.5 40H9Q6.5 40 6.5 37.5V17.9Q6.5 15.4 9 15.4Z" fill="#00f4f4" stroke="#031414" stroke-width="1.1"/>
 <text x="16.6" y="30.8" font-family="Liberation Sans" font-size="9.2" fill="#0a1e1e">C</text>
 <text x="26.6" y="30.8" font-family="Liberation Sans" font-size="9.2" fill="#0a1e1e">2</text>
 <path d="M9 91H30.5L41.5 102.5L30.5 114H9Q7 114 7 112V93Q7 91 9 91Z" fill="#000" stroke="#2626a8" stroke-width="1.2"/>
 <text x="16.6" y="106" font-family="Liberation Sans" font-size="9.2" fill="#2c2cb0">C</text>
 <text x="26.6" y="106" font-family="Liberation Sans" font-size="9.2" fill="#2c2cb0">6</text>
 <path d="M9 116.5H30.5L41.5 128.5L30.5 141H9Q7 141 7 139V118.5Q7 116.5 9 116.5Z" fill="#000" stroke="#d04c9c" stroke-width="1.2"/>
 <text x="16.6" y="132.5" font-family="Liberation Sans" font-size="9.2" fill="#d44ca0">C</text>
 <text x="26.6" y="132.5" font-family="Liberation Sans" font-size="9.2" fill="#d44ca0">7</text>
</svg>
<!-- dialog -->
<svg style="position:absolute;left:460px;top:120px" width="40" height="18"><path d="M2.2 16L20 0.8L37.8 16Z" fill="#a6a6a6"/></svg>
<div class="dlg">
 <div class="hdr"></div><div class="rs"></div>
 <div class="ttl">WAVEFORM VIEW</div>
 <svg style="position:absolute;left:523px;top:8px" width="28" height="28">
  <circle cx="14" cy="13.6" r="11.6" stroke="#efefef" stroke-width="2.2" fill="none"/>
  <text x="14.2" y="20.6" text-anchor="middle" font-family="Liberation Sans" font-weight="bold" font-size="20" fill="#efefef">?</text>
 </svg>
 <div class="lbl" style="left:11px;top:54px">Display Mode</div>
 <div class="seg" style="left:13px;top:75px;width:150px">
  <div class="on" style="width:76px"></div>
  <span style="left:11px;color:#0b1d3c">Overlay</span>
  <span style="left:88px;color:#111;letter-spacing:-0.15px">Stacked</span>
 </div>
 <div style="position:absolute;left:11.5px;top:71.5px;width:78px;height:42.5px;border:3px solid #94e2f8;border-radius:7px;box-shadow:inset 0 0 0 1px #2a9fc8"></div>
 <div class="lbl" style="left:302px;top:54px;letter-spacing:0.66px">Interpolation</div>
 <div class="seg" style="left:305px;top:75px;width:149px">
  <div class="on" style="width:75px"></div>
  <span style="left:11px;color:#0b1d3c;letter-spacing:-0.26px">Sin(x)/x</span>
  <span style="left:92px;color:#111">Linear</span>
 </div>
 <div class="lbl" style="left:11px;top:133px;letter-spacing:-0.29px">Persistence</div>
 <div class="dd" style="left:15px;top:154px;width:142px"><span>Off</span><i style="left:124px"></i></div>
 <div class="lbl" style="left:11px;top:228px">Waveform Style</div>
 <div class="seg" style="left:15px;top:249px;width:148px">
  <div class="on" style="width:74px"></div>
  <span style="left:9px;color:#0b1d3c">Vectors</span>
  <span style="left:97px;color:#111">Dots</span>
 </div>
 <div class="lbl" style="left:172px;top:212px"><span style="letter-spacing:0.52px">Waveform</span><br>Intensity</div>
 <div class="num" style="left:176px;top:249px;width:112px"><span>75%</span></div>
 <div class="lbl" style="left:302px;top:228px;letter-spacing:0.14px">Graticule Style</div>
 <div class="dd" style="left:306px;top:249px;width:117px"><span>Grid</span><i style="left:99px"></i></div>
 <div class="lbl" style="left:432px;top:212px">Graticule<br>Intensity</div>
 <div class="num" style="left:436px;top:249px;width:112px"><span>75%</span></div>
 <div style="position:absolute;left:3.5px;top:45.5px;width:174.5px;height:86.5px;border:4.2px solid #f00000;border-radius:15px"></div>
</div>
</body></html>
